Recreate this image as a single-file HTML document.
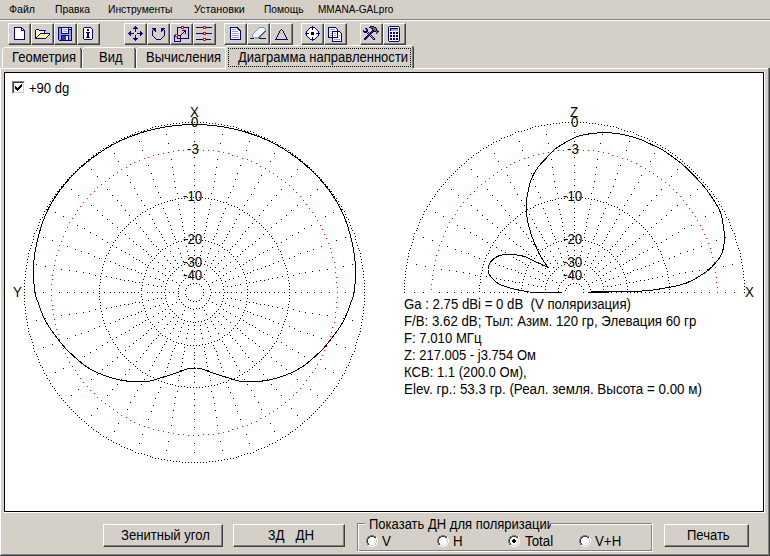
<!DOCTYPE html>
<html><head><meta charset="utf-8"><style>
html,body{margin:0;padding:0;}
body{width:770px;height:556px;overflow:hidden;background:#d4d0c8;position:relative;font-family:"Liberation Sans", sans-serif;color:#000;}
.a{position:absolute;}
.t{position:absolute;white-space:pre;line-height:1;font-family:"Liberation Sans", sans-serif;color:#000;}
.btn{position:absolute;box-sizing:border-box;background:#d4d0c8;border-top:1px solid #fff;border-left:1px solid #fff;border-right:1px solid #404040;border-bottom:1px solid #404040;}
.btn::after{content:"";position:absolute;left:0;top:0;right:0;bottom:0;border-right:1px solid #808080;border-bottom:1px solid #808080;}
svg{position:absolute;overflow:visible;}
</style></head><body>

<div class="t" style="left:9px;top:4px;font-size:11px;transform-origin:0 0;transform:scaleX(0.9612);">Файл</div>
<div class="t" style="left:54.5px;top:4px;font-size:11px;transform-origin:0 0;transform:scaleX(0.9416);">Правка</div>
<div class="t" style="left:108.4px;top:4px;font-size:11px;transform-origin:0 0;transform:scaleX(0.9375);">Инструменты</div>
<div class="t" style="left:194.3px;top:4px;font-size:11px;transform-origin:0 0;transform:scaleX(0.9791);">Установки</div>
<div class="t" style="left:264.4px;top:4px;font-size:11px;transform-origin:0 0;transform:scaleX(0.9318);">Помощь</div>
<div class="t" style="left:317.5px;top:4px;font-size:11px;transform-origin:0 0;transform:scaleX(0.9136);">MMANA-GALpro</div>
<div class="a" style="left:0;top:19px;width:770px;height:1px;background:#808080"></div>
<div class="a" style="left:0;top:20px;width:770px;height:1px;background:#fff"></div>
<div class="btn" style="left:8px;top:23px;width:23px;height:22px"></div>
<div class="btn" style="left:31px;top:23px;width:23px;height:22px"></div>
<div class="btn" style="left:54px;top:23px;width:23px;height:22px"></div>
<div class="btn" style="left:77px;top:23px;width:23px;height:22px"></div>
<div class="btn" style="left:124px;top:23px;width:23px;height:22px"></div>
<div class="btn" style="left:147px;top:23px;width:23px;height:22px"></div>
<div class="btn" style="left:170px;top:23px;width:23px;height:22px"></div>
<div class="btn" style="left:193px;top:23px;width:23px;height:22px"></div>
<div class="btn" style="left:224px;top:23px;width:23px;height:22px"></div>
<div class="btn" style="left:247px;top:23px;width:23px;height:22px"></div>
<div class="btn" style="left:270px;top:23px;width:23px;height:22px"></div>
<div class="btn" style="left:301px;top:23px;width:23px;height:22px"></div>
<div class="btn" style="left:324px;top:23px;width:23px;height:22px"></div>
<div class="btn" style="left:360px;top:23px;width:23px;height:22px"></div>
<div class="btn" style="left:383px;top:23px;width:23px;height:22px"></div>
<svg class="a" style="left:0;top:0" width="770" height="50" viewBox="0 0 770 50" shape-rendering="crispEdges">
<path fill="#000080" d="M14 27h8v1h-8zM14 28h1v1h-1zM21 28h2v1h-2zM14 29h1v1h-1zM21 29h1v1h-1zM23 29h1v1h-1zM14 30h1v1h-1zM21 30h4v1h-4zM14 31h1v1h-1zM24 31h1v1h-1zM14 32h1v1h-1zM24 32h1v1h-1zM14 33h1v1h-1zM24 33h1v1h-1zM14 34h1v1h-1zM24 34h1v1h-1zM14 35h1v1h-1zM24 35h1v1h-1zM14 36h1v1h-1zM24 36h1v1h-1zM14 37h1v1h-1zM24 37h1v1h-1zM14 38h1v1h-1zM24 38h1v1h-1zM14 39h11v1h-11z"/><path fill="#ffffff" d="M15 28h6v1h-6zM15 29h6v1h-6zM22 29h1v1h-1zM15 30h6v1h-6zM15 31h9v1h-9zM15 32h9v1h-9zM15 33h9v1h-9zM15 34h9v1h-9zM15 35h9v1h-9zM15 36h9v1h-9zM15 37h9v1h-9zM15 38h9v1h-9z"/><path fill="#000080" d="M36 29h3v1h-3zM35 30h1v1h-1zM39 30h7v1h-7zM35 31h1v1h-1zM44 31h1v1h-1zM35 32h1v1h-1zM44 32h1v1h-1zM35 33h1v1h-1zM40 33h10v1h-10zM35 34h1v1h-1zM39 34h1v1h-1zM49 34h1v1h-1zM35 35h1v1h-1zM38 35h1v1h-1zM48 35h1v1h-1zM35 36h1v1h-1zM37 36h1v1h-1zM47 36h1v1h-1zM35 37h2v1h-2zM46 37h1v1h-1zM35 38h11v1h-11z"/><path fill="#ffffd8" d="M36 30h3v1h-3zM36 31h8v1h-8zM36 32h8v1h-8zM36 33h4v1h-4zM36 34h3v1h-3zM36 35h2v1h-2zM36 36h1v1h-1z"/><path fill="#ffff9c" d="M40 34h9v1h-9zM39 35h9v1h-9zM38 36h9v1h-9zM37 37h9v1h-9z"/><path fill="#000080" d="M58 27h14v1h-14zM58 28h1v1h-1zM61 28h1v1h-1zM68 28h1v1h-1zM71 28h1v1h-1zM58 29h1v1h-1zM61 29h1v1h-1zM68 29h4v1h-4zM58 30h1v1h-1zM61 30h1v1h-1zM68 30h1v1h-1zM71 30h1v1h-1zM58 31h1v1h-1zM61 31h1v1h-1zM68 31h1v1h-1zM71 31h1v1h-1zM58 32h1v1h-1zM61 32h1v1h-1zM68 32h1v1h-1zM71 32h1v1h-1zM58 33h1v1h-1zM61 33h8v1h-8zM71 33h1v1h-1zM58 34h1v1h-1zM71 34h1v1h-1zM58 35h1v1h-1zM61 35h8v1h-8zM71 35h1v1h-1zM58 36h1v1h-1zM61 36h1v1h-1zM68 36h1v1h-1zM71 36h1v1h-1zM58 37h1v1h-1zM61 37h1v1h-1zM68 37h1v1h-1zM71 37h1v1h-1zM58 38h1v1h-1zM61 38h1v1h-1zM68 38h1v1h-1zM71 38h1v1h-1zM58 39h1v1h-1zM61 39h1v1h-1zM68 39h1v1h-1zM71 39h1v1h-1zM59 40h13v1h-13z"/><path fill="#9c9cdc" d="M59 28h2v1h-2zM59 29h2v1h-2zM63 29h4v1h-4zM59 30h2v1h-2zM69 30h2v1h-2zM59 31h2v1h-2zM63 31h4v1h-4zM69 31h2v1h-2zM59 32h2v1h-2zM69 32h2v1h-2zM59 33h2v1h-2zM69 33h2v1h-2zM59 34h12v1h-12zM59 35h2v1h-2zM69 35h2v1h-2zM59 36h2v1h-2zM69 36h2v1h-2zM59 37h2v1h-2zM69 37h2v1h-2zM59 38h2v1h-2zM69 38h2v1h-2zM59 39h2v1h-2zM69 39h2v1h-2z"/><path fill="#f4f0e4" d="M62 28h6v1h-6zM69 28h2v1h-2zM62 29h1v1h-1zM67 29h1v1h-1zM62 30h6v1h-6zM62 31h1v1h-1zM67 31h1v1h-1zM62 32h6v1h-6zM66 36h2v1h-2zM66 37h2v1h-2zM66 38h2v1h-2zM66 39h2v1h-2z"/><path fill="#3434a8" d="M62 36h4v1h-4zM62 37h4v1h-4zM62 38h4v1h-4zM62 39h4v1h-4z"/><path fill="#000080" d="M84 27h7v1h-7zM83 28h1v1h-1zM91 28h1v1h-1zM83 29h1v1h-1zM87 29h2v1h-2zM92 29h1v1h-1zM83 30h1v1h-1zM87 30h2v1h-2zM92 30h1v1h-1zM83 31h1v1h-1zM92 31h1v1h-1zM83 32h1v1h-1zM86 32h4v1h-4zM92 32h1v1h-1zM83 33h1v1h-1zM87 33h2v1h-2zM92 33h1v1h-1zM83 34h1v1h-1zM87 34h2v1h-2zM92 34h1v1h-1zM83 35h1v1h-1zM87 35h2v1h-2zM92 35h1v1h-1zM83 36h1v1h-1zM87 36h2v1h-2zM92 36h1v1h-1zM83 37h1v1h-1zM86 37h4v1h-4zM92 37h1v1h-1zM83 38h1v1h-1zM92 38h1v1h-1zM84 39h8v1h-8z"/><path fill="#ffffff" d="M84 28h7v1h-7zM84 29h3v1h-3zM89 29h3v1h-3zM84 30h3v1h-3zM89 30h3v1h-3zM84 31h8v1h-8zM84 32h2v1h-2zM90 32h2v1h-2zM84 33h3v1h-3zM89 33h3v1h-3zM84 34h3v1h-3zM89 34h3v1h-3zM84 35h3v1h-3zM89 35h3v1h-3zM84 36h3v1h-3zM89 36h3v1h-3zM84 37h2v1h-2zM90 37h2v1h-2zM84 38h8v1h-8z"/><path fill="#000080" d="M135 26h1v1h-1zM134 27h3v1h-3zM133 28h5v1h-5zM135 29h1v1h-1zM135 30h1v1h-1zM130 31h1v1h-1zM135 31h1v1h-1zM140 31h1v1h-1zM129 32h2v1h-2zM140 32h2v1h-2zM128 33h6v1h-6zM137 33h6v1h-6zM129 34h2v1h-2zM140 34h2v1h-2zM130 35h1v1h-1zM135 35h1v1h-1zM140 35h1v1h-1zM135 36h1v1h-1zM135 37h1v1h-1zM133 38h5v1h-5zM134 39h3v1h-3zM135 40h1v1h-1z"/><path fill="#000080" d="M152 28h4v1h-4zM161 28h4v1h-4zM153 29h3v1h-3zM161 29h3v1h-3zM152 30h1v1h-1zM154 30h2v1h-2zM161 30h2v1h-2zM164 30h1v1h-1zM152 31h1v1h-1zM155 31h1v1h-1zM161 31h1v1h-1zM164 31h1v1h-1zM152 32h1v1h-1zM164 32h1v1h-1zM152 33h1v1h-1zM164 33h1v1h-1zM152 34h1v1h-1zM164 34h1v1h-1zM152 35h1v1h-1zM164 35h1v1h-1zM153 36h1v1h-1zM163 36h1v1h-1zM154 37h1v1h-1zM162 37h1v1h-1zM155 38h1v1h-1zM161 38h1v1h-1zM156 39h5v1h-5z"/><path fill="#ff0000" d="M181 26h3v1h-3zM181 27h1v1h-1zM183 27h1v1h-1zM181 28h3v1h-3zM175 34h3v1h-3zM175 35h1v1h-1zM177 35h1v1h-1zM175 36h3v1h-3z"/><path fill="#000080" d="M177 27h4v1h-4zM184 27h5v1h-5zM177 28h1v1h-1zM188 28h1v1h-1zM177 29h1v1h-1zM188 29h1v1h-1zM177 30h1v1h-1zM182 30h4v1h-4zM188 30h1v1h-1zM177 31h1v1h-1zM184 31h2v1h-2zM188 31h1v1h-1zM177 32h1v1h-1zM183 32h1v1h-1zM185 32h1v1h-1zM188 32h1v1h-1zM177 33h1v1h-1zM182 33h1v1h-1zM185 33h1v1h-1zM188 33h1v1h-1zM181 34h1v1h-1zM188 34h1v1h-1zM174 35h1v1h-1zM178 35h3v1h-3zM188 35h1v1h-1zM174 36h1v1h-1zM180 36h1v1h-1zM188 36h1v1h-1zM174 37h1v1h-1zM177 37h1v1h-1zM180 37h1v1h-1zM188 37h1v1h-1zM174 38h1v1h-1zM177 38h12v1h-12zM174 39h1v1h-1zM180 39h1v1h-1zM174 40h1v1h-1zM180 40h1v1h-1zM174 41h7v1h-7z"/><path fill="#ffffff" d="M182 27h1v1h-1zM176 35h1v1h-1z"/><path fill="#ff0000" d="M203 26h3v1h-3zM203 27h1v1h-1zM205 27h1v1h-1zM203 28h3v1h-3zM203 32h3v1h-3zM203 33h1v1h-1zM205 33h1v1h-1zM203 34h3v1h-3zM203 38h3v1h-3zM203 39h1v1h-1zM205 39h1v1h-1zM203 40h3v1h-3z"/><path fill="#000080" d="M196 27h7v1h-7zM206 27h6v1h-6zM196 33h7v1h-7zM206 33h6v1h-6zM196 39h7v1h-7zM206 39h5v1h-5z"/><path fill="#ffffff" d="M204 27h1v1h-1zM204 33h1v1h-1zM204 39h1v1h-1z"/><path fill="#000080" d="M230 27h8v1h-8zM230 28h1v1h-1zM237 28h2v1h-2zM230 29h1v1h-1zM238 29h2v1h-2zM230 30h1v1h-1zM239 30h2v1h-2zM230 31h1v1h-1zM240 31h1v1h-1zM230 32h1v1h-1zM240 32h1v1h-1zM230 33h1v1h-1zM240 33h1v1h-1zM230 34h1v1h-1zM240 34h1v1h-1zM230 35h1v1h-1zM240 35h1v1h-1zM230 36h1v1h-1zM240 36h1v1h-1zM230 37h1v1h-1zM240 37h1v1h-1zM230 38h1v1h-1zM240 38h1v1h-1zM230 39h11v1h-11z"/><path fill="#ffffff" d="M231 28h6v1h-6zM231 29h1v1h-1zM236 29h2v1h-2zM231 30h8v1h-8zM231 31h1v1h-1zM238 31h2v1h-2zM231 32h9v1h-9zM231 33h1v1h-1zM239 33h1v1h-1zM231 34h9v1h-9zM231 35h1v1h-1zM239 35h1v1h-1zM231 36h9v1h-9zM231 37h1v1h-1zM239 37h1v1h-1zM231 38h9v1h-9z"/><path fill="#a0a0d8" d="M232 29h4v1h-4zM232 31h6v1h-6zM232 33h7v1h-7zM232 35h7v1h-7zM232 37h7v1h-7z"/><path fill="#7896cc" d="M259 27h5v1h-5zM258 28h1v1h-1zM264 28h1v1h-1zM257 29h1v1h-1zM265 29h1v1h-1zM256 30h1v1h-1zM265 30h1v1h-1zM255 31h1v1h-1zM254 32h1v1h-1zM253 33h1v1h-1zM252 34h1v1h-1zM252 35h1v1h-1zM252 36h1v1h-1zM253 37h1v1h-1z"/><path fill="#f0f4fc" d="M259 28h5v1h-5zM258 29h7v1h-7zM257 30h8v1h-8zM256 31h8v1h-8zM255 32h8v1h-8zM254 33h8v1h-8zM253 34h8v1h-8zM253 35h7v1h-7zM253 36h6v1h-6z"/><path fill="#4a6088" d="M264 31h2v1h-2zM263 32h2v1h-2zM262 33h2v1h-2zM261 34h2v1h-2zM260 35h2v1h-2zM259 36h2v1h-2zM258 37h2v1h-2z"/><path fill="#98a8c8" d="M254 37h4v1h-4zM255 38h3v1h-3z"/><path fill="#000080" d="M250 38h4v1h-4zM259 38h7v1h-7z"/><path fill="#000080" d="M281 29h1v1h-1zM280 30h1v1h-1zM282 30h1v1h-1zM279 31h1v1h-1zM283 31h1v1h-1zM279 32h1v1h-1zM283 32h1v1h-1zM278 33h1v1h-1zM284 33h1v1h-1zM278 34h1v1h-1zM284 34h1v1h-1zM277 35h1v1h-1zM285 35h1v1h-1zM277 36h1v1h-1zM285 36h1v1h-1zM276 37h1v1h-1zM286 37h1v1h-1zM276 38h1v1h-1zM286 38h1v1h-1zM275 39h13v1h-13z"/><path fill="#000080" d="M312 26h1v1h-1zM310 27h5v1h-5zM309 28h1v1h-1zM312 28h1v1h-1zM315 28h1v1h-1zM308 29h1v1h-1zM312 29h1v1h-1zM316 29h1v1h-1zM307 30h1v1h-1zM317 30h1v1h-1zM306 31h1v1h-1zM318 31h1v1h-1zM306 32h1v1h-1zM318 32h1v1h-1zM305 33h4v1h-4zM316 33h4v1h-4zM306 34h1v1h-1zM318 34h1v1h-1zM306 35h1v1h-1zM318 35h1v1h-1zM307 36h1v1h-1zM317 36h1v1h-1zM308 37h1v1h-1zM312 37h1v1h-1zM316 37h1v1h-1zM309 38h1v1h-1zM312 38h1v1h-1zM315 38h1v1h-1zM310 39h5v1h-5zM312 40h1v1h-1z"/><path fill="#ffffff" d="M310 28h2v1h-2zM313 28h2v1h-2zM309 29h3v1h-3zM313 29h3v1h-3zM308 30h9v1h-9zM307 31h11v1h-11zM307 32h4v1h-4zM314 32h4v1h-4zM309 33h2v1h-2zM314 33h2v1h-2zM307 34h4v1h-4zM314 34h4v1h-4zM307 35h11v1h-11zM308 36h9v1h-9zM309 37h3v1h-3zM313 37h3v1h-3zM310 38h2v1h-2zM313 38h2v1h-2z"/><path fill="#000000" d="M311 32h3v1h-3zM311 33h3v1h-3zM311 34h3v1h-3z"/><path fill="#000080" d="M328 27h8v1h-8zM328 28h1v1h-1zM336 28h1v1h-1zM328 29h1v1h-1zM337 29h1v1h-1zM328 30h1v1h-1zM337 30h1v1h-1zM328 31h1v1h-1zM332 31h8v1h-8zM328 32h1v1h-1zM332 32h1v1h-1zM337 32h1v1h-1zM340 32h1v1h-1zM328 33h1v1h-1zM332 33h1v1h-1zM337 33h1v1h-1zM341 33h1v1h-1zM328 34h1v1h-1zM332 34h1v1h-1zM337 34h1v1h-1zM341 34h1v1h-1zM328 35h1v1h-1zM332 35h1v1h-1zM337 35h1v1h-1zM341 35h1v1h-1zM328 36h1v1h-1zM332 36h1v1h-1zM337 36h1v1h-1zM341 36h1v1h-1zM328 37h10v1h-10zM341 37h1v1h-1zM332 38h1v1h-1zM341 38h1v1h-1zM332 39h1v1h-1zM341 39h1v1h-1zM332 40h1v1h-1zM341 40h1v1h-1zM332 41h10v1h-10z"/><path fill="#ffffff" d="M329 28h7v1h-7zM329 29h1v1h-1zM335 29h2v1h-2zM329 30h8v1h-8zM329 31h1v1h-1zM331 31h1v1h-1zM329 32h3v1h-3zM333 32h4v1h-4zM338 32h2v1h-2zM329 33h1v1h-1zM333 33h1v1h-1zM336 33h1v1h-1zM338 33h3v1h-3zM329 34h3v1h-3zM333 34h4v1h-4zM338 34h3v1h-3zM329 35h1v1h-1zM333 35h1v1h-1zM336 35h1v1h-1zM338 35h1v1h-1zM340 35h1v1h-1zM329 36h3v1h-3zM333 36h4v1h-4zM338 36h3v1h-3zM338 37h3v1h-3zM333 38h8v1h-8zM333 39h1v1h-1zM340 39h1v1h-1zM333 40h8v1h-8z"/><path fill="#a0a0d8" d="M330 29h5v1h-5zM330 31h1v1h-1zM330 33h2v1h-2zM334 33h2v1h-2zM330 35h2v1h-2zM334 35h2v1h-2zM339 35h1v1h-1zM334 39h6v1h-6z"/><path fill="#000080" d="M370 26h4v1h-4zM369 27h2v1h-2zM374 27h2v1h-2zM365 28h2v1h-2zM371 28h2v1h-2zM376 28h1v1h-1zM366 29h2v1h-2zM372 29h1v1h-1zM376 29h1v1h-1zM363 30h1v1h-1zM366 30h2v1h-2zM372 30h2v1h-2zM376 30h2v1h-2zM363 31h5v1h-5zM371 31h1v1h-1zM373 31h3v1h-3zM377 31h2v1h-2zM364 32h3v1h-3zM368 32h1v1h-1zM370 32h1v1h-1zM372 32h1v1h-1zM377 32h1v1h-1zM367 33h1v1h-1zM369 33h1v1h-1zM371 33h1v1h-1zM376 33h1v1h-1zM368 34h1v1h-1zM370 34h1v1h-1zM367 35h1v1h-1zM369 35h1v1h-1zM371 35h1v1h-1zM366 36h1v1h-1zM368 36h1v1h-1zM370 36h1v1h-1zM372 36h1v1h-1zM365 37h1v1h-1zM367 37h1v1h-1zM371 37h1v1h-1zM373 37h1v1h-1zM364 38h1v1h-1zM366 38h1v1h-1zM372 38h1v1h-1zM374 38h1v1h-1zM364 39h2v1h-2zM373 39h2v1h-2z"/><path fill="#808000" d="M371 27h3v1h-3zM373 28h3v1h-3zM373 29h3v1h-3zM374 30h2v1h-2zM376 31h1v1h-1zM376 32h1v1h-1z"/><path fill="#f4f0dc" d="M364 30h2v1h-2z"/><path fill="#900000" d="M372 31h1v1h-1zM371 32h1v1h-1zM370 33h1v1h-1zM369 34h1v1h-1zM368 35h1v1h-1zM367 36h1v1h-1zM366 37h1v1h-1zM365 38h1v1h-1z"/><path fill="#c0c0f0" d="M367 32h1v1h-1zM368 33h1v1h-1zM370 35h1v1h-1zM371 36h1v1h-1zM372 37h1v1h-1zM373 38h1v1h-1z"/><path fill="#000080" d="M389 26h10v1h-10zM388 27h1v1h-1zM399 27h1v1h-1zM388 28h1v1h-1zM390 28h8v1h-8zM399 28h1v1h-1zM388 29h1v1h-1zM390 29h1v1h-1zM399 29h1v1h-1zM388 30h1v1h-1zM390 30h1v1h-1zM399 30h1v1h-1zM388 31h1v1h-1zM399 31h1v1h-1zM388 32h1v1h-1zM390 32h2v1h-2zM393 32h2v1h-2zM396 32h2v1h-2zM399 32h1v1h-1zM388 33h1v1h-1zM390 33h2v1h-2zM393 33h2v1h-2zM396 33h2v1h-2zM399 33h1v1h-1zM388 34h1v1h-1zM399 34h1v1h-1zM388 35h1v1h-1zM390 35h2v1h-2zM393 35h2v1h-2zM396 35h2v1h-2zM399 35h1v1h-1zM388 36h1v1h-1zM390 36h2v1h-2zM393 36h2v1h-2zM396 36h2v1h-2zM399 36h1v1h-1zM388 37h1v1h-1zM399 37h1v1h-1zM388 38h1v1h-1zM390 38h2v1h-2zM393 38h2v1h-2zM396 38h2v1h-2zM399 38h1v1h-1zM388 39h1v1h-1zM390 39h2v1h-2zM393 39h2v1h-2zM396 39h2v1h-2zM399 39h1v1h-1zM388 40h1v1h-1zM399 40h1v1h-1zM389 41h10v1h-10z"/><path fill="#ffffff" d="M389 27h10v1h-10zM389 28h1v1h-1zM398 28h1v1h-1zM389 29h1v1h-1zM398 29h1v1h-1zM389 30h1v1h-1zM398 30h1v1h-1zM389 31h10v1h-10zM389 32h1v1h-1zM392 32h1v1h-1zM395 32h1v1h-1zM398 32h1v1h-1zM389 33h1v1h-1zM392 33h1v1h-1zM395 33h1v1h-1zM398 33h1v1h-1zM389 34h10v1h-10zM389 35h1v1h-1zM392 35h1v1h-1zM395 35h1v1h-1zM398 35h1v1h-1zM389 36h1v1h-1zM392 36h1v1h-1zM395 36h1v1h-1zM398 36h1v1h-1zM389 37h10v1h-10zM389 38h1v1h-1zM392 38h1v1h-1zM395 38h1v1h-1zM398 38h1v1h-1zM389 39h1v1h-1zM392 39h1v1h-1zM395 39h1v1h-1zM398 39h1v1h-1zM389 40h10v1h-10z"/><path fill="#9c9cdc" d="M391 29h7v1h-7zM391 30h7v1h-7z"/>
</svg>
<div class="a" style="left:0;top:68px;width:768px;height:1px;background:#fff"></div>
<div class="a" style="left:0;top:68px;width:1px;height:487px;background:#fff"></div>
<div class="a" style="left:768px;top:68px;width:1px;height:487px;background:#808080"></div>
<div class="a" style="left:769px;top:68px;width:1px;height:488px;background:#404040"></div>
<div class="a" style="left:1px;top:554px;width:768px;height:1px;background:#808080"></div>
<div class="a" style="left:0;top:555px;width:770px;height:1px;background:#404040"></div>
<div class="a" style="left:2px;top:47px;width:80px;height:21px;background:#d4d0c8"></div>
<div class="a" style="left:2px;top:49px;width:1px;height:19px;background:#fff"></div>
<div class="a" style="left:3px;top:48px;width:1px;height:1px;background:#fff"></div>
<div class="a" style="left:4px;top:47px;width:76px;height:1px;background:#fff"></div>
<div class="a" style="left:81px;top:49px;width:1px;height:19px;background:#404040"></div>
<div class="a" style="left:80px;top:48px;width:1px;height:1px;background:#404040"></div>
<div class="a" style="left:80px;top:49px;width:1px;height:19px;background:#808080"></div>
<div class="t" style="left:12px;top:50px;font-size:14px;transform-origin:0 0;transform:scaleX(0.9300)">Геометрия</div>
<div class="a" style="left:82px;top:47px;width:54px;height:21px;background:#d4d0c8"></div>
<div class="a" style="left:82px;top:49px;width:1px;height:19px;background:#fff"></div>
<div class="a" style="left:83px;top:48px;width:1px;height:1px;background:#fff"></div>
<div class="a" style="left:84px;top:47px;width:50px;height:1px;background:#fff"></div>
<div class="a" style="left:135px;top:49px;width:1px;height:19px;background:#404040"></div>
<div class="a" style="left:134px;top:48px;width:1px;height:1px;background:#404040"></div>
<div class="a" style="left:134px;top:49px;width:1px;height:19px;background:#808080"></div>
<div class="t" style="left:99px;top:50px;font-size:14px;transform-origin:0 0;transform:scaleX(0.9300)">Вид</div>
<div class="a" style="left:136px;top:47px;width:90px;height:21px;background:#d4d0c8"></div>
<div class="a" style="left:136px;top:49px;width:1px;height:19px;background:#fff"></div>
<div class="a" style="left:137px;top:48px;width:1px;height:1px;background:#fff"></div>
<div class="a" style="left:138px;top:47px;width:87px;height:1px;background:#fff"></div>
<div class="t" style="left:146px;top:50px;font-size:14px;transform-origin:0 0;transform:scaleX(0.9300)">Вычисления</div>
<div class="a" style="left:225px;top:45px;width:189px;height:25px;background:#d4d0c8"></div>
<div class="a" style="left:225px;top:47px;width:1px;height:23px;background:#fff"></div>
<div class="a" style="left:226px;top:46px;width:1px;height:1px;background:#fff"></div>
<div class="a" style="left:227px;top:45px;width:185px;height:1px;background:#fff"></div>
<div class="a" style="left:413px;top:47px;width:1px;height:21px;background:#404040"></div>
<div class="a" style="left:412px;top:46px;width:1px;height:1px;background:#404040"></div>
<div class="a" style="left:412px;top:47px;width:1px;height:21px;background:#808080"></div>
<div class="t" style="left:237.5px;top:50px;font-size:14px;transform-origin:0 0;transform:scaleX(0.9300)">Диаграмма направленности</div>
<div class="a" style="left:228px;top:48px;width:183px;height:19px;box-sizing:border-box;border:1px dotted #000"></div>
<div class="a" style="left:4px;top:72px;width:760px;height:440px;box-sizing:border-box;border:1px solid #000;background:#fff"></div>
<div class="a" style="left:764px;top:72px;width:1px;height:441px;background:#fff"></div>
<div class="a" style="left:4px;top:512px;width:761px;height:1px;background:#fff"></div>
<div class="a" style="left:12px;top:81px;width:13px;height:13px;box-sizing:border-box;border-top:1px solid #808080;border-left:1px solid #808080;border-right:1px solid #fff;border-bottom:1px solid #fff;"></div>
<div class="a" style="left:13px;top:82px;width:11px;height:11px;box-sizing:border-box;border-top:1px solid #404040;border-left:1px solid #404040;border-right:1px solid #d4d0c8;border-bottom:1px solid #d4d0c8;background:#fff"></div>
<svg class="a" style="left:0;top:0" width="770" height="556" shape-rendering="crispEdges"><path d="M21 84h1v1h-1zM20 85h2v1h-2zM15 86h1v1h-1zM19 86h3v1h-3zM15 87h2v1h-2zM18 87h3v1h-3zM15 88h5v1h-5zM16 89h3v1h-3zM17 90h1v1h-1z" fill="#000"/></svg>
<div class="t" style="left:29px;top:81px;font-size:14px;transform-origin:0 0;transform:scaleX(0.9300)">+90 dg</div>
<svg class="a" style="left:0;top:0" width="770" height="556" viewBox="0 0 770 556" shape-rendering="crispEdges">
<path d="M182 122h1v1h-1zM185 122h1v1h-1zM188 122h1v1h-1zM191 122h1v1h-1zM194 122h1v1h-1zM197 122h1v1h-1zM200 122h1v1h-1zM203 122h1v1h-1zM206 122h1v1h-1zM562 122h1v1h-1zM565 122h1v1h-1zM568 122h1v1h-1zM571 122h1v1h-1zM574 122h1v1h-1zM577 122h1v1h-1zM580 122h1v1h-1zM583 122h1v1h-1zM586 122h1v1h-1zM173 123h1v1h-1zM176 123h1v1h-1zM179 123h1v1h-1zM209 123h1v1h-1zM212 123h1v1h-1zM215 123h1v1h-1zM553 123h1v1h-1zM556 123h1v1h-1zM559 123h1v1h-1zM589 123h1v1h-1zM592 123h1v1h-1zM595 123h1v1h-1zM167 124h1v1h-1zM170 124h1v1h-1zM218 124h1v1h-1zM221 124h1v1h-1zM547 124h1v1h-1zM550 124h1v1h-1zM598 124h1v1h-1zM601 124h1v1h-1zM161 125h1v1h-1zM164 125h1v1h-1zM224 125h1v1h-1zM227 125h1v1h-1zM541 125h1v1h-1zM544 125h1v1h-1zM604 125h1v1h-1zM607 125h1v1h-1zM155 126h1v1h-1zM158 126h1v1h-1zM230 126h1v1h-1zM233 126h1v1h-1zM535 126h1v1h-1zM538 126h1v1h-1zM610 126h1v1h-1zM613 126h1v1h-1zM152 127h1v1h-1zM236 127h1v1h-1zM532 127h1v1h-1zM616 127h1v1h-1zM150 128h1v1h-1zM238 128h1v1h-1zM530 128h1v1h-1zM618 128h1v1h-1zM147 129h1v1h-1zM241 129h1v1h-1zM527 129h1v1h-1zM621 129h1v1h-1zM144 130h1v1h-1zM244 130h1v1h-1zM524 130h1v1h-1zM624 130h1v1h-1zM138 131h1v1h-1zM141 131h1v1h-1zM247 131h1v1h-1zM250 131h1v1h-1zM518 131h1v1h-1zM521 131h1v1h-1zM627 131h1v1h-1zM630 131h1v1h-1zM135 132h1v1h-1zM194 132h1v1h-1zM253 132h1v1h-1zM515 132h1v1h-1zM574 132h1v1h-1zM633 132h1v1h-1zM132 134h1v1h-1zM166 134h1v1h-1zM222 134h1v1h-1zM256 134h1v1h-1zM512 134h1v1h-1zM546 134h1v1h-1zM602 134h1v1h-1zM636 134h1v1h-1zM130 135h1v1h-1zM258 135h1v1h-1zM510 135h1v1h-1zM638 135h1v1h-1zM127 136h1v1h-1zM261 136h1v1h-1zM507 136h1v1h-1zM641 136h1v1h-1zM124 137h1v1h-1zM264 137h1v1h-1zM504 137h1v1h-1zM644 137h1v1h-1zM121 138h1v1h-1zM267 138h1v1h-1zM501 138h1v1h-1zM647 138h1v1h-1zM119 140h1v1h-1zM269 140h1v1h-1zM499 140h1v1h-1zM649 140h1v1h-1zM116 141h1v1h-1zM139 141h1v1h-1zM194 141h1v1h-1zM249 141h1v1h-1zM272 141h1v1h-1zM496 141h1v1h-1zM519 141h1v1h-1zM574 141h1v1h-1zM629 141h1v1h-1zM652 141h1v1h-1zM113 142h1v1h-1zM275 142h1v1h-1zM493 142h1v1h-1zM655 142h1v1h-1zM168 143h1v1h-1zM220 143h1v1h-1zM548 143h1v1h-1zM600 143h1v1h-1zM111 144h1v1h-1zM277 144h1v1h-1zM491 144h1v1h-1zM657 144h1v1h-1zM108 145h1v1h-1zM280 145h1v1h-1zM488 145h1v1h-1zM660 145h1v1h-1zM106 147h1v1h-1zM282 147h1v1h-1zM486 147h1v1h-1zM662 147h1v1h-1zM103 148h1v1h-1zM285 148h1v1h-1zM483 148h1v1h-1zM665 148h1v1h-1zM100 150h1v1h-1zM142 150h1v1h-1zM246 150h1v1h-1zM288 150h1v1h-1zM480 150h1v1h-1zM522 150h1v1h-1zM626 150h1v1h-1zM668 150h1v1h-1zM98 152h1v1h-1zM290 152h1v1h-1zM478 152h1v1h-1zM670 152h1v1h-1zM96 153h1v1h-1zM114 153h1v1h-1zM274 153h1v1h-1zM292 153h1v1h-1zM476 153h1v1h-1zM494 153h1v1h-1zM654 153h1v1h-1zM672 153h1v1h-1zM93 155h1v1h-1zM295 155h1v1h-1zM473 155h1v1h-1zM675 155h1v1h-1zM91 157h1v1h-1zM194 157h1v1h-1zM297 157h1v1h-1zM471 157h1v1h-1zM574 157h1v1h-1zM677 157h1v1h-1zM88 159h1v1h-1zM171 159h1v1h-1zM217 159h1v1h-1zM300 159h1v1h-1zM468 159h1v1h-1zM551 159h1v1h-1zM597 159h1v1h-1zM680 159h1v1h-1zM86 161h1v1h-1zM118 161h1v1h-1zM270 161h1v1h-1zM302 161h1v1h-1zM466 161h1v1h-1zM498 161h1v1h-1zM650 161h1v1h-1zM682 161h1v1h-1zM84 163h1v1h-1zM304 163h1v1h-1zM464 163h1v1h-1zM684 163h1v1h-1zM81 165h1v1h-1zM148 165h1v1h-1zM194 165h1v1h-1zM240 165h1v1h-1zM307 165h1v1h-1zM461 165h1v1h-1zM528 165h1v1h-1zM574 165h1v1h-1zM620 165h1v1h-1zM687 165h1v1h-1zM79 167h1v1h-1zM172 167h1v1h-1zM216 167h1v1h-1zM309 167h1v1h-1zM459 167h1v1h-1zM552 167h1v1h-1zM596 167h1v1h-1zM689 167h1v1h-1zM77 169h1v1h-1zM91 169h1v1h-1zM297 169h1v1h-1zM311 169h1v1h-1zM457 169h1v1h-1zM471 169h1v1h-1zM677 169h1v1h-1zM691 169h1v1h-1zM75 171h1v1h-1zM313 171h1v1h-1zM455 171h1v1h-1zM693 171h1v1h-1zM194 172h1v1h-1zM574 172h1v1h-1zM73 173h1v1h-1zM151 173h1v1h-1zM237 173h1v1h-1zM315 173h1v1h-1zM453 173h1v1h-1zM531 173h1v1h-1zM617 173h1v1h-1zM695 173h1v1h-1zM173 174h1v1h-1zM215 174h1v1h-1zM553 174h1v1h-1zM595 174h1v1h-1zM71 175h1v1h-1zM127 175h1v1h-1zM261 175h1v1h-1zM317 175h1v1h-1zM451 175h1v1h-1zM507 175h1v1h-1zM641 175h1v1h-1zM697 175h1v1h-1zM97 176h1v1h-1zM291 176h1v1h-1zM477 176h1v1h-1zM671 176h1v1h-1zM69 177h1v1h-1zM319 177h1v1h-1zM449 177h1v1h-1zM699 177h1v1h-1zM67 179h1v1h-1zM153 179h1v1h-1zM194 179h1v1h-1zM235 179h1v1h-1zM321 179h1v1h-1zM447 179h1v1h-1zM533 179h1v1h-1zM574 179h1v1h-1zM615 179h1v1h-1zM701 179h1v1h-1zM174 181h1v1h-1zM214 181h1v1h-1zM554 181h1v1h-1zM594 181h1v1h-1zM65 182h1v1h-1zM130 182h1v1h-1zM258 182h1v1h-1zM323 182h1v1h-1zM445 182h1v1h-1zM510 182h1v1h-1zM638 182h1v1h-1zM703 182h1v1h-1zM63 184h1v1h-1zM325 184h1v1h-1zM443 184h1v1h-1zM705 184h1v1h-1zM194 185h1v1h-1zM574 185h1v1h-1zM61 186h1v1h-1zM155 186h1v1h-1zM233 186h1v1h-1zM327 186h1v1h-1zM441 186h1v1h-1zM535 186h1v1h-1zM613 186h1v1h-1zM707 186h1v1h-1zM175 187h1v1h-1zM213 187h1v1h-1zM555 187h1v1h-1zM593 187h1v1h-1zM134 188h1v1h-1zM254 188h1v1h-1zM514 188h1v1h-1zM634 188h1v1h-1zM59 189h1v1h-1zM71 189h1v1h-1zM107 189h1v1h-1zM281 189h1v1h-1zM317 189h1v1h-1zM329 189h1v1h-1zM439 189h1v1h-1zM451 189h1v1h-1zM487 189h1v1h-1zM661 189h1v1h-1zM697 189h1v1h-1zM709 189h1v1h-1zM57 191h1v1h-1zM194 191h1v1h-1zM331 191h1v1h-1zM437 191h1v1h-1zM574 191h1v1h-1zM711 191h1v1h-1zM158 192h1v1h-1zM230 192h1v1h-1zM538 192h1v1h-1zM610 192h1v1h-1zM177 193h1v1h-1zM211 193h1v1h-1zM557 193h1v1h-1zM591 193h1v1h-1zM55 194h1v1h-1zM137 194h1v1h-1zM251 194h1v1h-1zM333 194h1v1h-1zM435 194h1v1h-1zM517 194h1v1h-1zM631 194h1v1h-1zM713 194h1v1h-1zM78 195h1v1h-1zM112 195h1v1h-1zM276 195h1v1h-1zM310 195h1v1h-1zM458 195h1v1h-1zM492 195h1v1h-1zM656 195h1v1h-1zM690 195h1v1h-1zM54 196h1v1h-1zM334 196h1v1h-1zM434 196h1v1h-1zM714 196h1v1h-1zM160 197h1v1h-1zM187 197h1v1h-1zM190 197h1v1h-1zM193 197h1v1h-1zM196 197h1v1h-1zM199 197h1v1h-1zM202 197h1v1h-1zM228 197h1v1h-1zM540 197h1v1h-1zM567 197h1v1h-1zM570 197h1v1h-1zM573 197h1v1h-1zM576 197h1v1h-1zM579 197h1v1h-1zM582 197h1v1h-1zM608 197h1v1h-1zM52 198h1v1h-1zM178 198h1v1h-1zM181 198h1v1h-1zM184 198h1v1h-1zM205 198h1v1h-1zM208 198h1v1h-1zM336 198h1v1h-1zM432 198h1v1h-1zM558 198h1v1h-1zM561 198h1v1h-1zM564 198h1v1h-1zM585 198h1v1h-1zM588 198h1v1h-1zM716 198h1v1h-1zM175 199h1v1h-1zM211 199h1v1h-1zM214 199h1v1h-1zM555 199h1v1h-1zM591 199h1v1h-1zM594 199h1v1h-1zM117 200h1v1h-1zM141 200h1v1h-1zM170 200h1v1h-1zM172 200h1v1h-1zM217 200h1v1h-1zM247 200h1v1h-1zM271 200h1v1h-1zM497 200h1v1h-1zM521 200h1v1h-1zM550 200h1v1h-1zM552 200h1v1h-1zM597 200h1v1h-1zM627 200h1v1h-1zM651 200h1v1h-1zM50 201h1v1h-1zM167 201h1v1h-1zM220 201h1v1h-1zM338 201h1v1h-1zM430 201h1v1h-1zM547 201h1v1h-1zM600 201h1v1h-1zM718 201h1v1h-1zM164 202h1v1h-1zM194 202h1v1h-1zM223 202h1v1h-1zM226 202h1v1h-1zM544 202h1v1h-1zM574 202h1v1h-1zM603 202h1v1h-1zM606 202h1v1h-1zM161 203h1v1h-1zM541 203h1v1h-1zM49 204h1v1h-1zM158 204h1v1h-1zM178 204h1v1h-1zM210 204h1v1h-1zM228 204h1v1h-1zM339 204h1v1h-1zM429 204h1v1h-1zM538 204h1v1h-1zM558 204h1v1h-1zM590 204h1v1h-1zM608 204h1v1h-1zM719 204h1v1h-1zM91 205h1v1h-1zM121 205h1v1h-1zM144 205h1v1h-1zM155 205h1v1h-1zM231 205h1v1h-1zM244 205h1v1h-1zM267 205h1v1h-1zM297 205h1v1h-1zM471 205h1v1h-1zM501 205h1v1h-1zM524 205h1v1h-1zM535 205h1v1h-1zM611 205h1v1h-1zM624 205h1v1h-1zM647 205h1v1h-1zM677 205h1v1h-1zM47 206h1v1h-1zM234 206h1v1h-1zM341 206h1v1h-1zM427 206h1v1h-1zM614 206h1v1h-1zM721 206h1v1h-1zM153 207h1v1h-1zM237 207h1v1h-1zM533 207h1v1h-1zM617 207h1v1h-1zM150 208h1v1h-1zM163 208h1v1h-1zM194 208h1v1h-1zM225 208h1v1h-1zM530 208h1v1h-1zM543 208h1v1h-1zM574 208h1v1h-1zM605 208h1v1h-1zM46 209h1v1h-1zM147 209h1v1h-1zM179 209h1v1h-1zM209 209h1v1h-1zM239 209h1v1h-1zM342 209h1v1h-1zM426 209h1v1h-1zM527 209h1v1h-1zM559 209h1v1h-1zM589 209h1v1h-1zM619 209h1v1h-1zM722 209h1v1h-1zM97 210h1v1h-1zM125 210h1v1h-1zM242 210h1v1h-1zM263 210h1v1h-1zM291 210h1v1h-1zM477 210h1v1h-1zM505 210h1v1h-1zM622 210h1v1h-1zM643 210h1v1h-1zM671 210h1v1h-1zM44 211h1v1h-1zM145 211h1v1h-1zM344 211h1v1h-1zM424 211h1v1h-1zM525 211h1v1h-1zM724 211h1v1h-1zM55 212h1v1h-1zM142 212h1v1h-1zM194 212h1v1h-1zM244 212h1v1h-1zM333 212h1v1h-1zM435 212h1v1h-1zM522 212h1v1h-1zM574 212h1v1h-1zM624 212h1v1h-1zM713 212h1v1h-1zM165 213h1v1h-1zM223 213h1v1h-1zM247 213h1v1h-1zM545 213h1v1h-1zM603 213h1v1h-1zM627 213h1v1h-1zM43 214h1v1h-1zM140 214h1v1h-1zM149 214h1v1h-1zM180 214h1v1h-1zM208 214h1v1h-1zM239 214h1v1h-1zM345 214h1v1h-1zM423 214h1v1h-1zM520 214h1v1h-1zM529 214h1v1h-1zM560 214h1v1h-1zM588 214h1v1h-1zM619 214h1v1h-1zM725 214h1v1h-1zM102 215h1v1h-1zM129 215h1v1h-1zM249 215h1v1h-1zM259 215h1v1h-1zM286 215h1v1h-1zM482 215h1v1h-1zM509 215h1v1h-1zM629 215h1v1h-1zM639 215h1v1h-1zM666 215h1v1h-1zM63 216h1v1h-1zM137 216h1v1h-1zM325 216h1v1h-1zM443 216h1v1h-1zM517 216h1v1h-1zM705 216h1v1h-1zM42 217h1v1h-1zM167 217h1v1h-1zM194 217h1v1h-1zM221 217h1v1h-1zM252 217h1v1h-1zM346 217h1v1h-1zM422 217h1v1h-1zM547 217h1v1h-1zM574 217h1v1h-1zM601 217h1v1h-1zM632 217h1v1h-1zM726 217h1v1h-1zM135 218h1v1h-1zM181 218h1v1h-1zM207 218h1v1h-1zM515 218h1v1h-1zM561 218h1v1h-1zM587 218h1v1h-1zM40 219h1v1h-1zM107 219h1v1h-1zM152 219h1v1h-1zM236 219h1v1h-1zM254 219h1v1h-1zM281 219h1v1h-1zM348 219h1v1h-1zM420 219h1v1h-1zM487 219h1v1h-1zM532 219h1v1h-1zM616 219h1v1h-1zM634 219h1v1h-1zM661 219h1v1h-1zM728 219h1v1h-1zM133 220h1v1h-1zM513 220h1v1h-1zM168 221h1v1h-1zM194 221h1v1h-1zM220 221h1v1h-1zM256 221h1v1h-1zM548 221h1v1h-1zM574 221h1v1h-1zM600 221h1v1h-1zM636 221h1v1h-1zM39 222h1v1h-1zM130 222h1v1h-1zM182 222h1v1h-1zM206 222h1v1h-1zM349 222h1v1h-1zM419 222h1v1h-1zM510 222h1v1h-1zM562 222h1v1h-1zM586 222h1v1h-1zM729 222h1v1h-1zM112 223h1v1h-1zM136 223h1v1h-1zM154 223h1v1h-1zM234 223h1v1h-1zM252 223h1v1h-1zM259 223h1v1h-1zM276 223h1v1h-1zM492 223h1v1h-1zM516 223h1v1h-1zM534 223h1v1h-1zM614 223h1v1h-1zM632 223h1v1h-1zM639 223h1v1h-1zM656 223h1v1h-1zM128 224h1v1h-1zM508 224h1v1h-1zM38 225h1v1h-1zM77 225h1v1h-1zM170 225h1v1h-1zM194 225h1v1h-1zM218 225h1v1h-1zM261 225h1v1h-1zM311 225h1v1h-1zM350 225h1v1h-1zM418 225h1v1h-1zM457 225h1v1h-1zM550 225h1v1h-1zM574 225h1v1h-1zM598 225h1v1h-1zM641 225h1v1h-1zM691 225h1v1h-1zM730 225h1v1h-1zM126 226h1v1h-1zM182 226h1v1h-1zM206 226h1v1h-1zM506 226h1v1h-1zM562 226h1v1h-1zM586 226h1v1h-1zM117 227h1v1h-1zM140 227h1v1h-1zM156 227h1v1h-1zM232 227h1v1h-1zM248 227h1v1h-1zM263 227h1v1h-1zM271 227h1v1h-1zM497 227h1v1h-1zM520 227h1v1h-1zM536 227h1v1h-1zM612 227h1v1h-1zM628 227h1v1h-1zM643 227h1v1h-1zM651 227h1v1h-1zM37 228h1v1h-1zM84 228h1v1h-1zM124 228h1v1h-1zM304 228h1v1h-1zM351 228h1v1h-1zM417 228h1v1h-1zM464 228h1v1h-1zM504 228h1v1h-1zM684 228h1v1h-1zM731 228h1v1h-1zM171 229h1v1h-1zM194 229h1v1h-1zM217 229h1v1h-1zM265 229h1v1h-1zM551 229h1v1h-1zM574 229h1v1h-1zM597 229h1v1h-1zM645 229h1v1h-1zM36 230h1v1h-1zM122 230h1v1h-1zM183 230h1v1h-1zM205 230h1v1h-1zM352 230h1v1h-1zM416 230h1v1h-1zM502 230h1v1h-1zM563 230h1v1h-1zM585 230h1v1h-1zM732 230h1v1h-1zM143 231h1v1h-1zM159 231h1v1h-1zM229 231h1v1h-1zM245 231h1v1h-1zM267 231h1v1h-1zM523 231h1v1h-1zM539 231h1v1h-1zM609 231h1v1h-1zM625 231h1v1h-1zM647 231h1v1h-1zM90 232h1v1h-1zM120 232h1v1h-1zM194 232h1v1h-1zM298 232h1v1h-1zM470 232h1v1h-1zM500 232h1v1h-1zM574 232h1v1h-1zM678 232h1v1h-1zM34 233h1v1h-1zM172 233h1v1h-1zM184 233h1v1h-1zM204 233h1v1h-1zM216 233h1v1h-1zM354 233h1v1h-1zM414 233h1v1h-1zM552 233h1v1h-1zM564 233h1v1h-1zM584 233h1v1h-1zM596 233h1v1h-1zM734 233h1v1h-1zM125 234h1v1h-1zM146 234h1v1h-1zM161 234h1v1h-1zM227 234h1v1h-1zM242 234h1v1h-1zM263 234h1v1h-1zM269 234h1v1h-1zM505 234h1v1h-1zM526 234h1v1h-1zM541 234h1v1h-1zM607 234h1v1h-1zM622 234h1v1h-1zM643 234h1v1h-1zM649 234h1v1h-1zM96 235h1v1h-1zM118 235h1v1h-1zM292 235h1v1h-1zM476 235h1v1h-1zM498 235h1v1h-1zM672 235h1v1h-1zM33 236h1v1h-1zM174 236h1v1h-1zM194 236h1v1h-1zM214 236h1v1h-1zM271 236h1v1h-1zM355 236h1v1h-1zM413 236h1v1h-1zM554 236h1v1h-1zM574 236h1v1h-1zM594 236h1v1h-1zM651 236h1v1h-1zM735 236h1v1h-1zM43 237h1v1h-1zM117 237h1v1h-1zM162 237h1v1h-1zM184 237h1v1h-1zM204 237h1v1h-1zM226 237h1v1h-1zM345 237h1v1h-1zM423 237h1v1h-1zM497 237h1v1h-1zM542 237h1v1h-1zM564 237h1v1h-1zM584 237h1v1h-1zM606 237h1v1h-1zM725 237h1v1h-1zM129 238h1v1h-1zM148 238h1v1h-1zM240 238h1v1h-1zM259 238h1v1h-1zM272 238h1v1h-1zM509 238h1v1h-1zM528 238h1v1h-1zM620 238h1v1h-1zM639 238h1v1h-1zM652 238h1v1h-1zM33 239h1v1h-1zM102 239h1v1h-1zM175 239h1v1h-1zM187 239h1v1h-1zM190 239h1v1h-1zM193 239h1v1h-1zM196 239h1v1h-1zM199 239h1v1h-1zM213 239h1v1h-1zM286 239h1v1h-1zM355 239h1v1h-1zM413 239h1v1h-1zM482 239h1v1h-1zM555 239h1v1h-1zM567 239h1v1h-1zM570 239h1v1h-1zM573 239h1v1h-1zM576 239h1v1h-1zM579 239h1v1h-1zM593 239h1v1h-1zM666 239h1v1h-1zM735 239h1v1h-1zM52 240h1v1h-1zM115 240h1v1h-1zM164 240h1v1h-1zM184 240h1v1h-1zM202 240h1v1h-1zM205 240h1v1h-1zM224 240h1v1h-1zM336 240h1v1h-1zM432 240h1v1h-1zM495 240h1v1h-1zM544 240h1v1h-1zM564 240h1v1h-1zM582 240h1v1h-1zM585 240h1v1h-1zM604 240h1v1h-1zM716 240h1v1h-1zM133 241h1v1h-1zM151 241h1v1h-1zM178 241h1v1h-1zM181 241h1v1h-1zM208 241h1v1h-1zM237 241h1v1h-1zM255 241h1v1h-1zM274 241h1v1h-1zM513 241h1v1h-1zM531 241h1v1h-1zM558 241h1v1h-1zM561 241h1v1h-1zM588 241h1v1h-1zM617 241h1v1h-1zM635 241h1v1h-1zM654 241h1v1h-1zM32 242h1v1h-1zM107 242h1v1h-1zM113 242h1v1h-1zM176 242h1v1h-1zM211 242h1v1h-1zM281 242h1v1h-1zM356 242h1v1h-1zM412 242h1v1h-1zM487 242h1v1h-1zM493 242h1v1h-1zM556 242h1v1h-1zM591 242h1v1h-1zM661 242h1v1h-1zM736 242h1v1h-1zM166 243h1v1h-1zM173 243h1v1h-1zM214 243h1v1h-1zM222 243h1v1h-1zM276 243h1v1h-1zM546 243h1v1h-1zM553 243h1v1h-1zM594 243h1v1h-1zM602 243h1v1h-1zM656 243h1v1h-1zM136 244h1v1h-1zM153 244h1v1h-1zM217 244h1v1h-1zM235 244h1v1h-1zM252 244h1v1h-1zM516 244h1v1h-1zM533 244h1v1h-1zM597 244h1v1h-1zM615 244h1v1h-1zM632 244h1v1h-1zM31 245h1v1h-1zM112 245h1v1h-1zM170 245h1v1h-1zM194 245h1v1h-1zM219 245h1v1h-1zM357 245h1v1h-1zM411 245h1v1h-1zM492 245h1v1h-1zM550 245h1v1h-1zM574 245h1v1h-1zM599 245h1v1h-1zM737 245h1v1h-1zM67 246h1v1h-1zM140 246h1v1h-1zM156 246h1v1h-1zM167 246h1v1h-1zM186 246h1v1h-1zM202 246h1v1h-1zM232 246h1v1h-1zM248 246h1v1h-1zM277 246h1v1h-1zM321 246h1v1h-1zM447 246h1v1h-1zM520 246h1v1h-1zM536 246h1v1h-1zM547 246h1v1h-1zM566 246h1v1h-1zM582 246h1v1h-1zM612 246h1v1h-1zM628 246h1v1h-1zM657 246h1v1h-1zM701 246h1v1h-1zM110 247h1v1h-1zM116 247h1v1h-1zM222 247h1v1h-1zM272 247h1v1h-1zM490 247h1v1h-1zM496 247h1v1h-1zM602 247h1v1h-1zM652 247h1v1h-1zM30 248h1v1h-1zM165 248h1v1h-1zM178 248h1v1h-1zM210 248h1v1h-1zM358 248h1v1h-1zM410 248h1v1h-1zM545 248h1v1h-1zM558 248h1v1h-1zM590 248h1v1h-1zM738 248h1v1h-1zM75 249h1v1h-1zM143 249h1v1h-1zM158 249h1v1h-1zM162 249h1v1h-1zM224 249h1v1h-1zM230 249h1v1h-1zM245 249h1v1h-1zM278 249h1v1h-1zM313 249h1v1h-1zM455 249h1v1h-1zM523 249h1v1h-1zM538 249h1v1h-1zM542 249h1v1h-1zM604 249h1v1h-1zM610 249h1v1h-1zM625 249h1v1h-1zM658 249h1v1h-1zM693 249h1v1h-1zM29 250h1v1h-1zM109 250h1v1h-1zM121 250h1v1h-1zM194 250h1v1h-1zM227 250h1v1h-1zM267 250h1v1h-1zM359 250h1v1h-1zM409 250h1v1h-1zM489 250h1v1h-1zM501 250h1v1h-1zM574 250h1v1h-1zM607 250h1v1h-1zM647 250h1v1h-1zM739 250h1v1h-1zM81 251h1v1h-1zM146 251h1v1h-1zM160 251h1v1h-1zM170 251h1v1h-1zM187 251h1v1h-1zM201 251h1v1h-1zM218 251h1v1h-1zM242 251h1v1h-1zM280 251h1v1h-1zM307 251h1v1h-1zM461 251h1v1h-1zM526 251h1v1h-1zM540 251h1v1h-1zM550 251h1v1h-1zM567 251h1v1h-1zM581 251h1v1h-1zM598 251h1v1h-1zM622 251h1v1h-1zM660 251h1v1h-1zM687 251h1v1h-1zM125 252h1v1h-1zM229 252h1v1h-1zM263 252h1v1h-1zM505 252h1v1h-1zM609 252h1v1h-1zM643 252h1v1h-1zM28 253h1v1h-1zM88 253h1v1h-1zM108 253h1v1h-1zM158 253h1v1h-1zM180 253h1v1h-1zM208 253h1v1h-1zM300 253h1v1h-1zM360 253h1v1h-1zM408 253h1v1h-1zM468 253h1v1h-1zM488 253h1v1h-1zM538 253h1v1h-1zM560 253h1v1h-1zM588 253h1v1h-1zM680 253h1v1h-1zM740 253h1v1h-1zM129 254h1v1h-1zM148 254h1v1h-1zM231 254h1v1h-1zM240 254h1v1h-1zM259 254h1v1h-1zM281 254h1v1h-1zM509 254h1v1h-1zM528 254h1v1h-1zM611 254h1v1h-1zM620 254h1v1h-1zM639 254h1v1h-1zM661 254h1v1h-1zM106 255h1v1h-1zM156 255h1v1h-1zM188 255h1v1h-1zM194 255h1v1h-1zM200 255h1v1h-1zM486 255h1v1h-1zM536 255h1v1h-1zM568 255h1v1h-1zM574 255h1v1h-1zM580 255h1v1h-1zM28 256h1v1h-1zM94 256h1v1h-1zM151 256h1v1h-1zM164 256h1v1h-1zM173 256h1v1h-1zM215 256h1v1h-1zM224 256h1v1h-1zM233 256h1v1h-1zM237 256h1v1h-1zM294 256h1v1h-1zM360 256h1v1h-1zM408 256h1v1h-1zM474 256h1v1h-1zM531 256h1v1h-1zM544 256h1v1h-1zM553 256h1v1h-1zM595 256h1v1h-1zM604 256h1v1h-1zM613 256h1v1h-1zM617 256h1v1h-1zM674 256h1v1h-1zM740 256h1v1h-1zM133 257h1v1h-1zM181 257h1v1h-1zM207 257h1v1h-1zM255 257h1v1h-1zM282 257h1v1h-1zM513 257h1v1h-1zM561 257h1v1h-1zM587 257h1v1h-1zM635 257h1v1h-1zM662 257h1v1h-1zM99 258h1v1h-1zM105 258h1v1h-1zM154 258h1v1h-1zM289 258h1v1h-1zM479 258h1v1h-1zM485 258h1v1h-1zM534 258h1v1h-1zM669 258h1v1h-1zM27 259h1v1h-1zM136 259h1v1h-1zM188 259h1v1h-1zM194 259h1v1h-1zM200 259h1v1h-1zM235 259h1v1h-1zM252 259h1v1h-1zM361 259h1v1h-1zM407 259h1v1h-1zM516 259h1v1h-1zM568 259h1v1h-1zM574 259h1v1h-1zM580 259h1v1h-1zM615 259h1v1h-1zM632 259h1v1h-1zM741 259h1v1h-1zM139 260h1v1h-1zM152 260h1v1h-1zM167 260h1v1h-1zM175 260h1v1h-1zM213 260h1v1h-1zM221 260h1v1h-1zM249 260h1v1h-1zM283 260h1v1h-1zM519 260h1v1h-1zM532 260h1v1h-1zM547 260h1v1h-1zM555 260h1v1h-1zM593 260h1v1h-1zM601 260h1v1h-1zM629 260h1v1h-1zM663 260h1v1h-1zM104 261h1v1h-1zM110 261h1v1h-1zM183 261h1v1h-1zM205 261h1v1h-1zM237 261h1v1h-1zM278 261h1v1h-1zM484 261h1v1h-1zM490 261h1v1h-1zM563 261h1v1h-1zM585 261h1v1h-1zM617 261h1v1h-1zM658 261h1v1h-1zM27 262h1v1h-1zM142 262h1v1h-1zM150 262h1v1h-1zM158 262h1v1h-1zM193 262h1v1h-1zM195 262h1v1h-1zM230 262h1v1h-1zM246 262h1v1h-1zM361 262h1v1h-1zM407 262h1v1h-1zM522 262h1v1h-1zM530 262h1v1h-1zM538 262h1v1h-1zM573 262h1v1h-1zM575 262h1v1h-1zM610 262h1v1h-1zM626 262h1v1h-1zM741 262h1v1h-1zM115 263h1v1h-1zM170 263h1v1h-1zM177 263h1v1h-1zM187 263h1v1h-1zM190 263h1v1h-1zM198 263h1v1h-1zM201 263h1v1h-1zM211 263h1v1h-1zM218 263h1v1h-1zM273 263h1v1h-1zM284 263h1v1h-1zM495 263h1v1h-1zM550 263h1v1h-1zM557 263h1v1h-1zM567 263h1v1h-1zM570 263h1v1h-1zM578 263h1v1h-1zM581 263h1v1h-1zM591 263h1v1h-1zM598 263h1v1h-1zM653 263h1v1h-1zM664 263h1v1h-1zM36 264h1v1h-1zM103 264h1v1h-1zM145 264h1v1h-1zM184 264h1v1h-1zM204 264h1v1h-1zM239 264h1v1h-1zM243 264h1v1h-1zM352 264h1v1h-1zM416 264h1v1h-1zM483 264h1v1h-1zM525 264h1v1h-1zM564 264h1v1h-1zM584 264h1v1h-1zM619 264h1v1h-1zM623 264h1v1h-1zM732 264h1v1h-1zM26 265h1v1h-1zM119 265h1v1h-1zM148 265h1v1h-1zM162 265h1v1h-1zM181 265h1v1h-1zM207 265h1v1h-1zM226 265h1v1h-1zM269 265h1v1h-1zM285 265h1v1h-1zM362 265h1v1h-1zM406 265h1v1h-1zM499 265h1v1h-1zM528 265h1v1h-1zM542 265h1v1h-1zM561 265h1v1h-1zM587 265h1v1h-1zM606 265h1v1h-1zM649 265h1v1h-1zM665 265h1v1h-1zM742 265h1v1h-1zM45 266h1v1h-1zM123 266h1v1h-1zM240 266h1v1h-1zM265 266h1v1h-1zM343 266h1v1h-1zM425 266h1v1h-1zM503 266h1v1h-1zM620 266h1v1h-1zM645 266h1v1h-1zM723 266h1v1h-1zM102 267h1v1h-1zM147 267h1v1h-1zM173 267h1v1h-1zM178 267h1v1h-1zM194 267h1v1h-1zM210 267h1v1h-1zM215 267h1v1h-1zM482 267h1v1h-1zM527 267h1v1h-1zM553 267h1v1h-1zM558 267h1v1h-1zM574 267h1v1h-1zM590 267h1v1h-1zM595 267h1v1h-1zM26 268h1v1h-1zM127 268h1v1h-1zM153 268h1v1h-1zM165 268h1v1h-1zM223 268h1v1h-1zM235 268h1v1h-1zM261 268h1v1h-1zM286 268h1v1h-1zM362 268h1v1h-1zM406 268h1v1h-1zM507 268h1v1h-1zM533 268h1v1h-1zM545 268h1v1h-1zM603 268h1v1h-1zM615 268h1v1h-1zM641 268h1v1h-1zM666 268h1v1h-1zM742 268h1v1h-1zM61 269h1v1h-1zM131 269h1v1h-1zM176 269h1v1h-1zM212 269h1v1h-1zM242 269h1v1h-1zM257 269h1v1h-1zM327 269h1v1h-1zM441 269h1v1h-1zM511 269h1v1h-1zM556 269h1v1h-1zM592 269h1v1h-1zM622 269h1v1h-1zM637 269h1v1h-1zM707 269h1v1h-1zM69 270h1v1h-1zM102 270h1v1h-1zM135 270h1v1h-1zM146 270h1v1h-1zM182 270h1v1h-1zM206 270h1v1h-1zM253 270h1v1h-1zM319 270h1v1h-1zM449 270h1v1h-1zM482 270h1v1h-1zM515 270h1v1h-1zM526 270h1v1h-1zM562 270h1v1h-1zM586 270h1v1h-1zM633 270h1v1h-1zM699 270h1v1h-1zM25 271h1v1h-1zM76 271h1v1h-1zM158 271h1v1h-1zM169 271h1v1h-1zM174 271h1v1h-1zM194 271h1v1h-1zM214 271h1v1h-1zM219 271h1v1h-1zM230 271h1v1h-1zM287 271h1v1h-1zM312 271h1v1h-1zM363 271h1v1h-1zM405 271h1v1h-1zM456 271h1v1h-1zM538 271h1v1h-1zM549 271h1v1h-1zM554 271h1v1h-1zM574 271h1v1h-1zM594 271h1v1h-1zM599 271h1v1h-1zM610 271h1v1h-1zM667 271h1v1h-1zM692 271h1v1h-1zM743 271h1v1h-1zM83 272h1v1h-1zM138 272h1v1h-1zM243 272h1v1h-1zM250 272h1v1h-1zM305 272h1v1h-1zM463 272h1v1h-1zM518 272h1v1h-1zM623 272h1v1h-1zM630 272h1v1h-1zM685 272h1v1h-1zM89 273h1v1h-1zM101 273h1v1h-1zM141 273h1v1h-1zM145 273h1v1h-1zM162 273h1v1h-1zM172 273h1v1h-1zM216 273h1v1h-1zM226 273h1v1h-1zM247 273h1v1h-1zM299 273h1v1h-1zM469 273h1v1h-1zM481 273h1v1h-1zM521 273h1v1h-1zM525 273h1v1h-1zM542 273h1v1h-1zM552 273h1v1h-1zM596 273h1v1h-1zM606 273h1v1h-1zM627 273h1v1h-1zM679 273h1v1h-1zM25 274h1v1h-1zM184 274h1v1h-1zM204 274h1v1h-1zM244 274h1v1h-1zM287 274h1v1h-1zM363 274h1v1h-1zM405 274h1v1h-1zM564 274h1v1h-1zM584 274h1v1h-1zM624 274h1v1h-1zM667 274h1v1h-1zM743 274h1v1h-1zM95 275h1v1h-1zM165 275h1v1h-1zM170 275h1v1h-1zM193 275h1v1h-1zM218 275h1v1h-1zM223 275h1v1h-1zM293 275h1v1h-1zM475 275h1v1h-1zM545 275h1v1h-1zM550 275h1v1h-1zM573 275h1v1h-1zM598 275h1v1h-1zM603 275h1v1h-1zM673 275h1v1h-1zM100 276h1v1h-1zM106 276h1v1h-1zM144 276h1v1h-1zM150 276h1v1h-1zM190 276h1v1h-1zM196 276h1v1h-1zM199 276h1v1h-1zM238 276h1v1h-1zM282 276h1v1h-1zM480 276h1v1h-1zM486 276h1v1h-1zM524 276h1v1h-1zM530 276h1v1h-1zM570 276h1v1h-1zM576 276h1v1h-1zM579 276h1v1h-1zM618 276h1v1h-1zM662 276h1v1h-1zM25 277h1v1h-1zM111 277h1v1h-1zM188 277h1v1h-1zM202 277h1v1h-1zM245 277h1v1h-1zM277 277h1v1h-1zM288 277h1v1h-1zM363 277h1v1h-1zM405 277h1v1h-1zM491 277h1v1h-1zM568 277h1v1h-1zM582 277h1v1h-1zM625 277h1v1h-1zM657 277h1v1h-1zM668 277h1v1h-1zM743 277h1v1h-1zM116 278h1v1h-1zM155 278h1v1h-1zM168 278h1v1h-1zM185 278h1v1h-1zM220 278h1v1h-1zM233 278h1v1h-1zM272 278h1v1h-1zM496 278h1v1h-1zM535 278h1v1h-1zM548 278h1v1h-1zM565 278h1v1h-1zM600 278h1v1h-1zM613 278h1v1h-1zM652 278h1v1h-1zM100 279h1v1h-1zM120 279h1v1h-1zM143 279h1v1h-1zM159 279h1v1h-1zM204 279h1v1h-1zM229 279h1v1h-1zM268 279h1v1h-1zM480 279h1v1h-1zM500 279h1v1h-1zM523 279h1v1h-1zM539 279h1v1h-1zM584 279h1v1h-1zM609 279h1v1h-1zM648 279h1v1h-1zM24 280h1v1h-1zM124 280h1v1h-1zM128 280h1v1h-1zM167 280h1v1h-1zM172 280h1v1h-1zM183 280h1v1h-1zM216 280h1v1h-1zM221 280h1v1h-1zM246 280h1v1h-1zM260 280h1v1h-1zM264 280h1v1h-1zM288 280h1v1h-1zM364 280h1v1h-1zM404 280h1v1h-1zM504 280h1v1h-1zM508 280h1v1h-1zM547 280h1v1h-1zM552 280h1v1h-1zM563 280h1v1h-1zM596 280h1v1h-1zM601 280h1v1h-1zM626 280h1v1h-1zM640 280h1v1h-1zM644 280h1v1h-1zM668 280h1v1h-1zM744 280h1v1h-1zM132 281h1v1h-1zM163 281h1v1h-1zM206 281h1v1h-1zM225 281h1v1h-1zM256 281h1v1h-1zM512 281h1v1h-1zM543 281h1v1h-1zM586 281h1v1h-1zM605 281h1v1h-1zM636 281h1v1h-1zM100 282h1v1h-1zM135 282h1v1h-1zM139 282h1v1h-1zM142 282h1v1h-1zM176 282h1v1h-1zM181 282h1v1h-1zM212 282h1v1h-1zM249 282h1v1h-1zM253 282h1v1h-1zM480 282h1v1h-1zM515 282h1v1h-1zM519 282h1v1h-1zM522 282h1v1h-1zM556 282h1v1h-1zM561 282h1v1h-1zM592 282h1v1h-1zM629 282h1v1h-1zM633 282h1v1h-1zM24 283h1v1h-1zM166 283h1v1h-1zM193 283h1v1h-1zM196 283h1v1h-1zM222 283h1v1h-1zM246 283h1v1h-1zM289 283h1v1h-1zM364 283h1v1h-1zM404 283h1v1h-1zM546 283h1v1h-1zM573 283h1v1h-1zM576 283h1v1h-1zM602 283h1v1h-1zM626 283h1v1h-1zM669 283h1v1h-1zM744 283h1v1h-1zM148 284h1v1h-1zM190 284h1v1h-1zM199 284h1v1h-1zM208 284h1v1h-1zM240 284h1v1h-1zM528 284h1v1h-1zM570 284h1v1h-1zM579 284h1v1h-1zM588 284h1v1h-1zM620 284h1v1h-1zM99 285h1v1h-1zM142 285h1v1h-1zM153 285h1v1h-1zM179 285h1v1h-1zM188 285h1v1h-1zM235 285h1v1h-1zM479 285h1v1h-1zM522 285h1v1h-1zM533 285h1v1h-1zM559 285h1v1h-1zM568 285h1v1h-1zM615 285h1v1h-1zM24 286h1v1h-1zM157 286h1v1h-1zM161 286h1v1h-1zM165 286h1v1h-1zM201 286h1v1h-1zM209 286h1v1h-1zM223 286h1v1h-1zM227 286h1v1h-1zM231 286h1v1h-1zM247 286h1v1h-1zM289 286h1v1h-1zM364 286h1v1h-1zM404 286h1v1h-1zM537 286h1v1h-1zM541 286h1v1h-1zM545 286h1v1h-1zM581 286h1v1h-1zM589 286h1v1h-1zM603 286h1v1h-1zM607 286h1v1h-1zM611 286h1v1h-1zM627 286h1v1h-1zM669 286h1v1h-1zM744 286h1v1h-1zM99 288h1v1h-1zM141 288h1v1h-1zM178 288h1v1h-1zM186 288h1v1h-1zM479 288h1v1h-1zM521 288h1v1h-1zM558 288h1v1h-1zM566 288h1v1h-1zM24 289h1v1h-1zM165 289h1v1h-1zM203 289h1v1h-1zM210 289h1v1h-1zM223 289h1v1h-1zM247 289h1v1h-1zM289 289h1v1h-1zM364 289h1v1h-1zM404 289h1v1h-1zM545 289h1v1h-1zM583 289h1v1h-1zM590 289h1v1h-1zM603 289h1v1h-1zM627 289h1v1h-1zM669 289h1v1h-1zM744 289h1v1h-1zM141 290h1v1h-1zM185 290h1v1h-1zM521 290h1v1h-1zM565 290h1v1h-1zM99 291h1v1h-1zM178 291h1v1h-1zM479 291h1v1h-1zM558 291h1v1h-1zM24 292h1v1h-1zM34 292h1v1h-1zM43 292h1v1h-1zM59 292h1v1h-1zM67 292h1v1h-1zM74 292h1v1h-1zM81 292h1v1h-1zM87 292h1v1h-1zM93 292h1v1h-1zM104 292h1v1h-1zM110 292h1v1h-1zM114 292h1v1h-1zM119 292h1v1h-1zM123 292h1v1h-1zM127 292h1v1h-1zM131 292h1v1h-1zM134 292h1v1h-1zM138 292h1v1h-1zM147 292h1v1h-1zM152 292h1v1h-1zM157 292h1v1h-1zM161 292h1v1h-1zM164 292h1v1h-1zM169 292h1v1h-1zM173 292h1v1h-1zM203 292h1v1h-1zM211 292h1v1h-1zM215 292h1v1h-1zM219 292h1v1h-1zM224 292h1v1h-1zM227 292h1v1h-1zM231 292h1v1h-1zM236 292h1v1h-1zM241 292h1v1h-1zM247 292h1v1h-1zM250 292h1v1h-1zM254 292h1v1h-1zM257 292h1v1h-1zM261 292h1v1h-1zM265 292h1v1h-1zM269 292h1v1h-1zM274 292h1v1h-1zM278 292h1v1h-1zM284 292h1v1h-1zM289 292h1v1h-1zM295 292h1v1h-1zM301 292h1v1h-1zM307 292h1v1h-1zM314 292h1v1h-1zM321 292h1v1h-1zM329 292h1v1h-1zM345 292h1v1h-1zM354 292h1v1h-1zM364 292h1v1h-1zM404 292h1v1h-1zM414 292h1v1h-1zM423 292h1v1h-1zM439 292h1v1h-1zM447 292h1v1h-1zM454 292h1v1h-1zM461 292h1v1h-1zM467 292h1v1h-1zM473 292h1v1h-1zM484 292h1v1h-1zM490 292h1v1h-1zM494 292h1v1h-1zM499 292h1v1h-1zM503 292h1v1h-1zM507 292h1v1h-1zM511 292h1v1h-1zM514 292h1v1h-1zM518 292h1v1h-1zM527 292h1v1h-1zM532 292h1v1h-1zM537 292h1v1h-1zM541 292h1v1h-1zM544 292h1v1h-1zM549 292h1v1h-1zM553 292h1v1h-1zM583 292h1v1h-1zM591 292h1v1h-1zM595 292h1v1h-1zM599 292h1v1h-1zM604 292h1v1h-1zM607 292h1v1h-1zM611 292h1v1h-1zM616 292h1v1h-1zM621 292h1v1h-1zM627 292h1v1h-1zM630 292h1v1h-1zM634 292h1v1h-1zM637 292h1v1h-1zM641 292h1v1h-1zM645 292h1v1h-1zM649 292h1v1h-1zM654 292h1v1h-1zM658 292h1v1h-1zM664 292h1v1h-1zM669 292h1v1h-1zM675 292h1v1h-1zM681 292h1v1h-1zM687 292h1v1h-1zM694 292h1v1h-1zM701 292h1v1h-1zM709 292h1v1h-1zM725 292h1v1h-1zM734 292h1v1h-1zM744 292h1v1h-1zM99 293h1v1h-1zM178 293h1v1h-1zM141 294h1v1h-1zM185 294h1v1h-1zM24 295h1v1h-1zM165 295h1v1h-1zM203 295h1v1h-1zM210 295h1v1h-1zM223 295h1v1h-1zM247 295h1v1h-1zM289 295h1v1h-1zM364 295h1v1h-1zM99 296h1v1h-1zM141 296h1v1h-1zM178 296h1v1h-1zM186 296h1v1h-1zM24 298h1v1h-1zM157 298h1v1h-1zM161 298h1v1h-1zM165 298h1v1h-1zM201 298h1v1h-1zM209 298h1v1h-1zM223 298h1v1h-1zM227 298h1v1h-1zM231 298h1v1h-1zM247 298h1v1h-1zM289 298h1v1h-1zM364 298h1v1h-1zM99 299h1v1h-1zM142 299h1v1h-1zM153 299h1v1h-1zM179 299h1v1h-1zM188 299h1v1h-1zM235 299h1v1h-1zM148 300h1v1h-1zM190 300h1v1h-1zM199 300h1v1h-1zM208 300h1v1h-1zM240 300h1v1h-1zM24 301h1v1h-1zM166 301h1v1h-1zM193 301h1v1h-1zM196 301h1v1h-1zM222 301h1v1h-1zM246 301h1v1h-1zM289 301h1v1h-1zM364 301h1v1h-1zM100 302h1v1h-1zM135 302h1v1h-1zM139 302h1v1h-1zM142 302h1v1h-1zM176 302h1v1h-1zM181 302h1v1h-1zM212 302h1v1h-1zM249 302h1v1h-1zM253 302h1v1h-1zM132 303h1v1h-1zM163 303h1v1h-1zM206 303h1v1h-1zM225 303h1v1h-1zM256 303h1v1h-1zM24 304h1v1h-1zM124 304h1v1h-1zM128 304h1v1h-1zM167 304h1v1h-1zM172 304h1v1h-1zM183 304h1v1h-1zM216 304h1v1h-1zM221 304h1v1h-1zM246 304h1v1h-1zM260 304h1v1h-1zM264 304h1v1h-1zM288 304h1v1h-1zM364 304h1v1h-1zM100 305h1v1h-1zM120 305h1v1h-1zM143 305h1v1h-1zM159 305h1v1h-1zM204 305h1v1h-1zM229 305h1v1h-1zM268 305h1v1h-1zM116 306h1v1h-1zM155 306h1v1h-1zM168 306h1v1h-1zM185 306h1v1h-1zM220 306h1v1h-1zM233 306h1v1h-1zM272 306h1v1h-1zM25 307h1v1h-1zM111 307h1v1h-1zM188 307h1v1h-1zM202 307h1v1h-1zM245 307h1v1h-1zM277 307h1v1h-1zM288 307h1v1h-1zM363 307h1v1h-1zM100 308h1v1h-1zM106 308h1v1h-1zM144 308h1v1h-1zM150 308h1v1h-1zM190 308h1v1h-1zM196 308h1v1h-1zM199 308h1v1h-1zM238 308h1v1h-1zM282 308h1v1h-1zM95 309h1v1h-1zM165 309h1v1h-1zM170 309h1v1h-1zM193 309h1v1h-1zM218 309h1v1h-1zM223 309h1v1h-1zM293 309h1v1h-1zM25 310h1v1h-1zM184 310h1v1h-1zM204 310h1v1h-1zM244 310h1v1h-1zM287 310h1v1h-1zM363 310h1v1h-1zM89 311h1v1h-1zM101 311h1v1h-1zM141 311h1v1h-1zM145 311h1v1h-1zM162 311h1v1h-1zM172 311h1v1h-1zM216 311h1v1h-1zM226 311h1v1h-1zM247 311h1v1h-1zM299 311h1v1h-1zM83 312h1v1h-1zM138 312h1v1h-1zM243 312h1v1h-1zM250 312h1v1h-1zM305 312h1v1h-1zM25 313h1v1h-1zM76 313h1v1h-1zM158 313h1v1h-1zM169 313h1v1h-1zM174 313h1v1h-1zM194 313h1v1h-1zM214 313h1v1h-1zM219 313h1v1h-1zM230 313h1v1h-1zM287 313h1v1h-1zM312 313h1v1h-1zM363 313h1v1h-1zM69 314h1v1h-1zM102 314h1v1h-1zM135 314h1v1h-1zM146 314h1v1h-1zM182 314h1v1h-1zM206 314h1v1h-1zM253 314h1v1h-1zM319 314h1v1h-1zM61 315h1v1h-1zM131 315h1v1h-1zM176 315h1v1h-1zM212 315h1v1h-1zM242 315h1v1h-1zM257 315h1v1h-1zM327 315h1v1h-1zM26 316h1v1h-1zM127 316h1v1h-1zM153 316h1v1h-1zM165 316h1v1h-1zM223 316h1v1h-1zM235 316h1v1h-1zM261 316h1v1h-1zM286 316h1v1h-1zM362 316h1v1h-1zM102 317h1v1h-1zM147 317h1v1h-1zM173 317h1v1h-1zM178 317h1v1h-1zM194 317h1v1h-1zM210 317h1v1h-1zM215 317h1v1h-1zM45 318h1v1h-1zM123 318h1v1h-1zM240 318h1v1h-1zM265 318h1v1h-1zM343 318h1v1h-1zM26 319h1v1h-1zM119 319h1v1h-1zM148 319h1v1h-1zM162 319h1v1h-1zM181 319h1v1h-1zM207 319h1v1h-1zM226 319h1v1h-1zM269 319h1v1h-1zM285 319h1v1h-1zM362 319h1v1h-1zM36 320h1v1h-1zM103 320h1v1h-1zM145 320h1v1h-1zM184 320h1v1h-1zM204 320h1v1h-1zM239 320h1v1h-1zM243 320h1v1h-1zM352 320h1v1h-1zM115 321h1v1h-1zM170 321h1v1h-1zM177 321h1v1h-1zM187 321h1v1h-1zM190 321h1v1h-1zM198 321h1v1h-1zM201 321h1v1h-1zM211 321h1v1h-1zM218 321h1v1h-1zM273 321h1v1h-1zM284 321h1v1h-1zM27 322h1v1h-1zM142 322h1v1h-1zM150 322h1v1h-1zM158 322h1v1h-1zM193 322h1v1h-1zM195 322h1v1h-1zM230 322h1v1h-1zM246 322h1v1h-1zM361 322h1v1h-1zM104 323h1v1h-1zM110 323h1v1h-1zM183 323h1v1h-1zM205 323h1v1h-1zM237 323h1v1h-1zM278 323h1v1h-1zM139 324h1v1h-1zM152 324h1v1h-1zM167 324h1v1h-1zM175 324h1v1h-1zM213 324h1v1h-1zM221 324h1v1h-1zM249 324h1v1h-1zM283 324h1v1h-1zM27 325h1v1h-1zM136 325h1v1h-1zM188 325h1v1h-1zM194 325h1v1h-1zM200 325h1v1h-1zM235 325h1v1h-1zM252 325h1v1h-1zM361 325h1v1h-1zM99 326h1v1h-1zM105 326h1v1h-1zM154 326h1v1h-1zM289 326h1v1h-1zM133 327h1v1h-1zM181 327h1v1h-1zM207 327h1v1h-1zM255 327h1v1h-1zM282 327h1v1h-1zM28 328h1v1h-1zM94 328h1v1h-1zM151 328h1v1h-1zM164 328h1v1h-1zM173 328h1v1h-1zM215 328h1v1h-1zM224 328h1v1h-1zM233 328h1v1h-1zM237 328h1v1h-1zM294 328h1v1h-1zM360 328h1v1h-1zM106 329h1v1h-1zM156 329h1v1h-1zM188 329h1v1h-1zM194 329h1v1h-1zM200 329h1v1h-1zM129 330h1v1h-1zM148 330h1v1h-1zM231 330h1v1h-1zM240 330h1v1h-1zM259 330h1v1h-1zM281 330h1v1h-1zM28 331h1v1h-1zM88 331h1v1h-1zM108 331h1v1h-1zM158 331h1v1h-1zM180 331h1v1h-1zM208 331h1v1h-1zM300 331h1v1h-1zM360 331h1v1h-1zM125 332h1v1h-1zM229 332h1v1h-1zM263 332h1v1h-1zM81 333h1v1h-1zM146 333h1v1h-1zM160 333h1v1h-1zM170 333h1v1h-1zM187 333h1v1h-1zM201 333h1v1h-1zM218 333h1v1h-1zM242 333h1v1h-1zM280 333h1v1h-1zM307 333h1v1h-1zM29 334h1v1h-1zM109 334h1v1h-1zM121 334h1v1h-1zM194 334h1v1h-1zM227 334h1v1h-1zM267 334h1v1h-1zM359 334h1v1h-1zM75 335h1v1h-1zM143 335h1v1h-1zM158 335h1v1h-1zM162 335h1v1h-1zM224 335h1v1h-1zM230 335h1v1h-1zM245 335h1v1h-1zM278 335h1v1h-1zM313 335h1v1h-1zM30 336h1v1h-1zM165 336h1v1h-1zM178 336h1v1h-1zM210 336h1v1h-1zM358 336h1v1h-1zM110 337h1v1h-1zM116 337h1v1h-1zM222 337h1v1h-1zM272 337h1v1h-1zM67 338h1v1h-1zM140 338h1v1h-1zM156 338h1v1h-1zM167 338h1v1h-1zM186 338h1v1h-1zM202 338h1v1h-1zM232 338h1v1h-1zM248 338h1v1h-1zM277 338h1v1h-1zM321 338h1v1h-1zM31 339h1v1h-1zM112 339h1v1h-1zM170 339h1v1h-1zM194 339h1v1h-1zM219 339h1v1h-1zM357 339h1v1h-1zM136 340h1v1h-1zM153 340h1v1h-1zM217 340h1v1h-1zM235 340h1v1h-1zM252 340h1v1h-1zM166 341h1v1h-1zM173 341h1v1h-1zM214 341h1v1h-1zM222 341h1v1h-1zM276 341h1v1h-1zM32 342h1v1h-1zM107 342h1v1h-1zM113 342h1v1h-1zM176 342h1v1h-1zM211 342h1v1h-1zM281 342h1v1h-1zM356 342h1v1h-1zM133 343h1v1h-1zM151 343h1v1h-1zM178 343h1v1h-1zM181 343h1v1h-1zM208 343h1v1h-1zM237 343h1v1h-1zM255 343h1v1h-1zM274 343h1v1h-1zM52 344h1v1h-1zM115 344h1v1h-1zM164 344h1v1h-1zM184 344h1v1h-1zM202 344h1v1h-1zM205 344h1v1h-1zM224 344h1v1h-1zM336 344h1v1h-1zM33 345h1v1h-1zM102 345h1v1h-1zM175 345h1v1h-1zM187 345h1v1h-1zM190 345h1v1h-1zM193 345h1v1h-1zM196 345h1v1h-1zM199 345h1v1h-1zM213 345h1v1h-1zM286 345h1v1h-1zM355 345h1v1h-1zM129 346h1v1h-1zM148 346h1v1h-1zM240 346h1v1h-1zM259 346h1v1h-1zM272 346h1v1h-1zM43 347h1v1h-1zM117 347h1v1h-1zM162 347h1v1h-1zM184 347h1v1h-1zM204 347h1v1h-1zM226 347h1v1h-1zM345 347h1v1h-1zM33 348h1v1h-1zM174 348h1v1h-1zM194 348h1v1h-1zM214 348h1v1h-1zM271 348h1v1h-1zM355 348h1v1h-1zM96 349h1v1h-1zM118 349h1v1h-1zM292 349h1v1h-1zM125 350h1v1h-1zM146 350h1v1h-1zM161 350h1v1h-1zM227 350h1v1h-1zM242 350h1v1h-1zM263 350h1v1h-1zM269 350h1v1h-1zM34 351h1v1h-1zM172 351h1v1h-1zM184 351h1v1h-1zM204 351h1v1h-1zM216 351h1v1h-1zM354 351h1v1h-1zM90 352h1v1h-1zM120 352h1v1h-1zM194 352h1v1h-1zM298 352h1v1h-1zM143 353h1v1h-1zM159 353h1v1h-1zM229 353h1v1h-1zM245 353h1v1h-1zM267 353h1v1h-1zM36 354h1v1h-1zM122 354h1v1h-1zM183 354h1v1h-1zM205 354h1v1h-1zM352 354h1v1h-1zM171 355h1v1h-1zM194 355h1v1h-1zM217 355h1v1h-1zM265 355h1v1h-1zM37 356h1v1h-1zM84 356h1v1h-1zM124 356h1v1h-1zM304 356h1v1h-1zM351 356h1v1h-1zM117 357h1v1h-1zM140 357h1v1h-1zM156 357h1v1h-1zM232 357h1v1h-1zM248 357h1v1h-1zM263 357h1v1h-1zM271 357h1v1h-1zM126 358h1v1h-1zM182 358h1v1h-1zM206 358h1v1h-1zM38 359h1v1h-1zM77 359h1v1h-1zM170 359h1v1h-1zM194 359h1v1h-1zM218 359h1v1h-1zM261 359h1v1h-1zM311 359h1v1h-1zM350 359h1v1h-1zM128 360h1v1h-1zM112 361h1v1h-1zM136 361h1v1h-1zM154 361h1v1h-1zM234 361h1v1h-1zM252 361h1v1h-1zM259 361h1v1h-1zM276 361h1v1h-1zM39 362h1v1h-1zM130 362h1v1h-1zM182 362h1v1h-1zM206 362h1v1h-1zM349 362h1v1h-1zM168 363h1v1h-1zM194 363h1v1h-1zM220 363h1v1h-1zM256 363h1v1h-1zM133 364h1v1h-1zM40 365h1v1h-1zM107 365h1v1h-1zM152 365h1v1h-1zM236 365h1v1h-1zM254 365h1v1h-1zM281 365h1v1h-1zM348 365h1v1h-1zM135 366h1v1h-1zM181 366h1v1h-1zM207 366h1v1h-1zM42 367h1v1h-1zM167 367h1v1h-1zM194 367h1v1h-1zM221 367h1v1h-1zM252 367h1v1h-1zM346 367h1v1h-1zM63 368h1v1h-1zM137 368h1v1h-1zM325 368h1v1h-1zM102 369h1v1h-1zM129 369h1v1h-1zM249 369h1v1h-1zM259 369h1v1h-1zM286 369h1v1h-1zM43 370h1v1h-1zM140 370h1v1h-1zM149 370h1v1h-1zM180 370h1v1h-1zM208 370h1v1h-1zM239 370h1v1h-1zM345 370h1v1h-1zM165 371h1v1h-1zM223 371h1v1h-1zM247 371h1v1h-1zM55 372h1v1h-1zM142 372h1v1h-1zM194 372h1v1h-1zM244 372h1v1h-1zM333 372h1v1h-1zM44 373h1v1h-1zM145 373h1v1h-1zM344 373h1v1h-1zM97 374h1v1h-1zM125 374h1v1h-1zM242 374h1v1h-1zM263 374h1v1h-1zM291 374h1v1h-1zM46 375h1v1h-1zM147 375h1v1h-1zM179 375h1v1h-1zM209 375h1v1h-1zM239 375h1v1h-1zM342 375h1v1h-1zM150 376h1v1h-1zM163 376h1v1h-1zM194 376h1v1h-1zM225 376h1v1h-1zM153 377h1v1h-1zM237 377h1v1h-1zM47 378h1v1h-1zM234 378h1v1h-1zM341 378h1v1h-1zM91 379h1v1h-1zM121 379h1v1h-1zM144 379h1v1h-1zM155 379h1v1h-1zM231 379h1v1h-1zM244 379h1v1h-1zM267 379h1v1h-1zM297 379h1v1h-1zM49 380h1v1h-1zM158 380h1v1h-1zM178 380h1v1h-1zM210 380h1v1h-1zM228 380h1v1h-1zM339 380h1v1h-1zM161 381h1v1h-1zM164 382h1v1h-1zM194 382h1v1h-1zM223 382h1v1h-1zM226 382h1v1h-1zM50 383h1v1h-1zM167 383h1v1h-1zM220 383h1v1h-1zM338 383h1v1h-1zM117 384h1v1h-1zM141 384h1v1h-1zM170 384h1v1h-1zM172 384h1v1h-1zM217 384h1v1h-1zM247 384h1v1h-1zM271 384h1v1h-1zM175 385h1v1h-1zM211 385h1v1h-1zM214 385h1v1h-1zM52 386h1v1h-1zM178 386h1v1h-1zM181 386h1v1h-1zM184 386h1v1h-1zM205 386h1v1h-1zM208 386h1v1h-1zM336 386h1v1h-1zM160 387h1v1h-1zM187 387h1v1h-1zM190 387h1v1h-1zM193 387h1v1h-1zM196 387h1v1h-1zM199 387h1v1h-1zM202 387h1v1h-1zM228 387h1v1h-1zM54 388h1v1h-1zM334 388h1v1h-1zM78 389h1v1h-1zM112 389h1v1h-1zM276 389h1v1h-1zM310 389h1v1h-1zM55 390h1v1h-1zM137 390h1v1h-1zM251 390h1v1h-1zM333 390h1v1h-1zM177 391h1v1h-1zM211 391h1v1h-1zM158 392h1v1h-1zM230 392h1v1h-1zM57 393h1v1h-1zM194 393h1v1h-1zM331 393h1v1h-1zM59 395h1v1h-1zM71 395h1v1h-1zM107 395h1v1h-1zM281 395h1v1h-1zM317 395h1v1h-1zM329 395h1v1h-1zM134 396h1v1h-1zM254 396h1v1h-1zM175 397h1v1h-1zM213 397h1v1h-1zM61 398h1v1h-1zM155 398h1v1h-1zM233 398h1v1h-1zM327 398h1v1h-1zM194 399h1v1h-1zM63 400h1v1h-1zM325 400h1v1h-1zM65 402h1v1h-1zM130 402h1v1h-1zM258 402h1v1h-1zM323 402h1v1h-1zM174 403h1v1h-1zM214 403h1v1h-1zM67 405h1v1h-1zM153 405h1v1h-1zM194 405h1v1h-1zM235 405h1v1h-1zM321 405h1v1h-1zM69 407h1v1h-1zM319 407h1v1h-1zM97 408h1v1h-1zM291 408h1v1h-1zM71 409h1v1h-1zM127 409h1v1h-1zM261 409h1v1h-1zM317 409h1v1h-1zM173 410h1v1h-1zM215 410h1v1h-1zM73 411h1v1h-1zM151 411h1v1h-1zM237 411h1v1h-1zM315 411h1v1h-1zM194 412h1v1h-1zM75 413h1v1h-1zM313 413h1v1h-1zM77 415h1v1h-1zM91 415h1v1h-1zM297 415h1v1h-1zM311 415h1v1h-1zM79 417h1v1h-1zM172 417h1v1h-1zM216 417h1v1h-1zM309 417h1v1h-1zM81 419h1v1h-1zM148 419h1v1h-1zM194 419h1v1h-1zM240 419h1v1h-1zM307 419h1v1h-1zM84 421h1v1h-1zM304 421h1v1h-1zM86 423h1v1h-1zM118 423h1v1h-1zM270 423h1v1h-1zM302 423h1v1h-1zM88 425h1v1h-1zM171 425h1v1h-1zM217 425h1v1h-1zM300 425h1v1h-1zM91 427h1v1h-1zM194 427h1v1h-1zM297 427h1v1h-1zM93 429h1v1h-1zM295 429h1v1h-1zM96 431h1v1h-1zM114 431h1v1h-1zM274 431h1v1h-1zM292 431h1v1h-1zM98 432h1v1h-1zM290 432h1v1h-1zM100 434h1v1h-1zM142 434h1v1h-1zM246 434h1v1h-1zM288 434h1v1h-1zM103 436h1v1h-1zM285 436h1v1h-1zM106 437h1v1h-1zM282 437h1v1h-1zM108 439h1v1h-1zM280 439h1v1h-1zM111 440h1v1h-1zM277 440h1v1h-1zM168 441h1v1h-1zM220 441h1v1h-1zM113 442h1v1h-1zM275 442h1v1h-1zM116 443h1v1h-1zM139 443h1v1h-1zM194 443h1v1h-1zM249 443h1v1h-1zM272 443h1v1h-1zM119 444h1v1h-1zM269 444h1v1h-1zM121 446h1v1h-1zM267 446h1v1h-1zM124 447h1v1h-1zM264 447h1v1h-1zM127 448h1v1h-1zM261 448h1v1h-1zM130 449h1v1h-1zM258 449h1v1h-1zM132 450h1v1h-1zM166 450h1v1h-1zM222 450h1v1h-1zM256 450h1v1h-1zM135 452h1v1h-1zM194 452h1v1h-1zM253 452h1v1h-1zM138 453h1v1h-1zM141 453h1v1h-1zM247 453h1v1h-1zM250 453h1v1h-1zM144 454h1v1h-1zM244 454h1v1h-1zM147 455h1v1h-1zM241 455h1v1h-1zM150 456h1v1h-1zM238 456h1v1h-1zM152 457h1v1h-1zM236 457h1v1h-1zM155 458h1v1h-1zM158 458h1v1h-1zM230 458h1v1h-1zM233 458h1v1h-1zM161 459h1v1h-1zM164 459h1v1h-1zM224 459h1v1h-1zM227 459h1v1h-1zM167 460h1v1h-1zM170 460h1v1h-1zM218 460h1v1h-1zM221 460h1v1h-1zM173 461h1v1h-1zM176 461h1v1h-1zM179 461h1v1h-1zM209 461h1v1h-1zM212 461h1v1h-1zM215 461h1v1h-1zM182 462h1v1h-1zM185 462h1v1h-1zM188 462h1v1h-1zM191 462h1v1h-1zM194 462h1v1h-1zM197 462h1v1h-1zM200 462h1v1h-1zM203 462h1v1h-1zM206 462h1v1h-1z" fill="#000"/>
<path d="M188 149h1v1h-1zM193 149h1v1h-1zM198 149h1v1h-1zM568 149h1v1h-1zM573 149h1v1h-1zM578 149h1v1h-1zM178 150h1v1h-1zM183 150h1v1h-1zM203 150h1v1h-1zM208 150h1v1h-1zM213 150h1v1h-1zM558 150h1v1h-1zM563 150h1v1h-1zM583 150h1v1h-1zM588 150h1v1h-1zM593 150h1v1h-1zM173 151h1v1h-1zM218 151h1v1h-1zM553 151h1v1h-1zM598 151h1v1h-1zM168 152h1v1h-1zM223 152h1v1h-1zM548 152h1v1h-1zM603 152h1v1h-1zM163 153h1v1h-1zM228 153h1v1h-1zM543 153h1v1h-1zM608 153h1v1h-1zM158 154h1v1h-1zM538 154h1v1h-1zM153 155h1v1h-1zM232 155h1v1h-1zM533 155h1v1h-1zM612 155h1v1h-1zM237 156h1v1h-1zM617 156h1v1h-1zM148 157h1v1h-1zM528 157h1v1h-1zM144 158h1v1h-1zM242 158h1v1h-1zM524 158h1v1h-1zM622 158h1v1h-1zM247 159h1v1h-1zM627 159h1v1h-1zM139 160h1v1h-1zM519 160h1v1h-1zM251 161h1v1h-1zM631 161h1v1h-1zM134 162h1v1h-1zM514 162h1v1h-1zM256 163h1v1h-1zM636 163h1v1h-1zM130 164h1v1h-1zM510 164h1v1h-1zM260 166h1v1h-1zM640 166h1v1h-1zM126 167h1v1h-1zM506 167h1v1h-1zM265 168h1v1h-1zM645 168h1v1h-1zM121 169h1v1h-1zM501 169h1v1h-1zM269 171h1v1h-1zM649 171h1v1h-1zM117 172h1v1h-1zM497 172h1v1h-1zM273 173h1v1h-1zM653 173h1v1h-1zM113 175h1v1h-1zM493 175h1v1h-1zM277 176h1v1h-1zM657 176h1v1h-1zM109 178h1v1h-1zM489 178h1v1h-1zM281 179h1v1h-1zM661 179h1v1h-1zM105 181h1v1h-1zM485 181h1v1h-1zM285 182h1v1h-1zM665 182h1v1h-1zM101 184h1v1h-1zM481 184h1v1h-1zM289 185h1v1h-1zM669 185h1v1h-1zM97 187h1v1h-1zM477 187h1v1h-1zM293 189h1v1h-1zM673 189h1v1h-1zM94 191h1v1h-1zM474 191h1v1h-1zM296 192h1v1h-1zM676 192h1v1h-1zM90 194h1v1h-1zM470 194h1v1h-1zM300 196h1v1h-1zM680 196h1v1h-1zM87 198h1v1h-1zM467 198h1v1h-1zM303 200h1v1h-1zM683 200h1v1h-1zM83 202h1v1h-1zM463 202h1v1h-1zM306 204h1v1h-1zM686 204h1v1h-1zM80 206h1v1h-1zM460 206h1v1h-1zM309 208h1v1h-1zM689 208h1v1h-1zM77 210h1v1h-1zM457 210h1v1h-1zM312 212h1v1h-1zM692 212h1v1h-1zM75 214h1v1h-1zM455 214h1v1h-1zM315 216h1v1h-1zM695 216h1v1h-1zM72 218h1v1h-1zM452 218h1v1h-1zM317 220h1v1h-1zM697 220h1v1h-1zM69 222h1v1h-1zM449 222h1v1h-1zM320 225h1v1h-1zM700 225h1v1h-1zM67 227h1v1h-1zM447 227h1v1h-1zM322 229h1v1h-1zM702 229h1v1h-1zM65 231h1v1h-1zM445 231h1v1h-1zM324 234h1v1h-1zM704 234h1v1h-1zM63 236h1v1h-1zM443 236h1v1h-1zM326 238h1v1h-1zM706 238h1v1h-1zM61 241h1v1h-1zM441 241h1v1h-1zM328 243h1v1h-1zM708 243h1v1h-1zM59 245h1v1h-1zM439 245h1v1h-1zM330 248h1v1h-1zM710 248h1v1h-1zM58 250h1v1h-1zM438 250h1v1h-1zM331 252h1v1h-1zM711 252h1v1h-1zM56 255h1v1h-1zM436 255h1v1h-1zM332 257h1v1h-1zM712 257h1v1h-1zM55 260h1v1h-1zM435 260h1v1h-1zM334 262h1v1h-1zM714 262h1v1h-1zM54 265h1v1h-1zM434 265h1v1h-1zM335 267h1v1h-1zM715 267h1v1h-1zM53 270h1v1h-1zM433 270h1v1h-1zM335 272h1v1h-1zM715 272h1v1h-1zM52 275h1v1h-1zM432 275h1v1h-1zM336 277h1v1h-1zM716 277h1v1h-1zM52 279h1v1h-1zM432 279h1v1h-1zM336 282h1v1h-1zM716 282h1v1h-1zM51 284h1v1h-1zM431 284h1v1h-1zM337 287h1v1h-1zM717 287h1v1h-1zM51 289h1v1h-1zM431 289h1v1h-1zM337 292h1v1h-1zM717 292h1v1h-1zM51 295h1v1h-1zM337 297h1v1h-1zM51 300h1v1h-1zM336 302h1v1h-1zM52 305h1v1h-1zM336 307h1v1h-1zM52 309h1v1h-1zM335 312h1v1h-1zM53 314h1v1h-1zM335 317h1v1h-1zM54 319h1v1h-1zM334 322h1v1h-1zM55 324h1v1h-1zM332 327h1v1h-1zM56 329h1v1h-1zM331 332h1v1h-1zM58 334h1v1h-1zM330 336h1v1h-1zM59 339h1v1h-1zM328 341h1v1h-1zM61 343h1v1h-1zM326 346h1v1h-1zM63 348h1v1h-1zM324 350h1v1h-1zM65 353h1v1h-1zM322 355h1v1h-1zM67 357h1v1h-1zM320 359h1v1h-1zM69 362h1v1h-1zM317 364h1v1h-1zM72 366h1v1h-1zM315 368h1v1h-1zM75 370h1v1h-1zM312 372h1v1h-1zM77 374h1v1h-1zM309 376h1v1h-1zM80 378h1v1h-1zM306 380h1v1h-1zM83 382h1v1h-1zM303 384h1v1h-1zM87 386h1v1h-1zM300 388h1v1h-1zM90 390h1v1h-1zM296 392h1v1h-1zM94 393h1v1h-1zM293 395h1v1h-1zM97 397h1v1h-1zM289 399h1v1h-1zM101 400h1v1h-1zM285 402h1v1h-1zM105 403h1v1h-1zM281 405h1v1h-1zM109 406h1v1h-1zM277 408h1v1h-1zM113 409h1v1h-1zM273 411h1v1h-1zM117 412h1v1h-1zM269 413h1v1h-1zM121 415h1v1h-1zM265 416h1v1h-1zM126 417h1v1h-1zM260 418h1v1h-1zM130 420h1v1h-1zM256 421h1v1h-1zM134 422h1v1h-1zM251 423h1v1h-1zM139 424h1v1h-1zM247 425h1v1h-1zM144 426h1v1h-1zM242 426h1v1h-1zM148 427h1v1h-1zM237 428h1v1h-1zM153 429h1v1h-1zM232 429h1v1h-1zM158 430h1v1h-1zM163 431h1v1h-1zM228 431h1v1h-1zM168 432h1v1h-1zM223 432h1v1h-1zM173 433h1v1h-1zM218 433h1v1h-1zM178 434h1v1h-1zM183 434h1v1h-1zM203 434h1v1h-1zM208 434h1v1h-1zM213 434h1v1h-1zM188 435h1v1h-1zM193 435h1v1h-1zM198 435h1v1h-1z" fill="#f00"/>
</svg>
<svg class="a" style="left:0;top:0" width="770" height="556" viewBox="0 0 770 556" shape-rendering="crispEdges">
<path d="M194.5 368.3 193.7 368.2 192.5 368.0 191.0 368.0 189.2 368.3 186.9 369.1 184.0 370.1 180.9 371.2 177.5 372.4 173.9 373.7 169.8 375.1 165.7 376.4 161.9 377.5 158.4 378.6 155.3 379.7 152.3 380.6 149.3 381.2 146.3 381.5 143.5 381.6 140.7 381.5 137.8 381.5 134.8 381.4 131.7 381.4 128.5 381.2 125.4 380.9 122.4 380.5 119.3 379.9 116.3 379.2 113.1 378.3 109.7 377.3 106.2 376.1 102.7 374.8 99.4 373.5 96.3 372.1 93.4 370.6 90.5 369.1 87.6 367.4 84.6 365.3 81.6 363.0 78.7 360.5 76.0 358.2 73.5 356.0 71.2 353.9 68.9 351.8 66.6 349.4 64.3 347.0 62.2 344.4 59.9 341.6 57.4 338.4 54.5 334.6 51.4 330.4 48.4 325.9 45.8 321.4 43.5 316.8 41.5 312.0 39.8 307.5 38.4 303.4 37.3 300.5 36.5 298.5 35.8 296.2 35.0 292.5 34.2 286.7 33.6 279.5 33.4 271.7 33.7 264.1 34.3 257.0 35.4 249.8 36.8 242.7 38.5 235.7 40.5 228.8 42.8 221.9 45.4 215.3 48.2 209.1 51.2 203.6 54.2 198.6 57.5 193.7 61.3 188.5 65.8 182.9 70.8 177.2 76.4 171.6 82.5 165.9 89.3 160.2 96.9 154.6 104.8 149.3 112.6 144.8 120.3 140.9 127.9 137.5 135.4 134.7 142.5 132.3 148.9 130.5 154.8 129.0 160.6 127.8 166.8 126.7 173.5 125.8 180.4 125.1 187.5 124.7 194.5 124.6 201.5 124.7 208.6 125.1 215.5 125.8 222.2 126.7 228.4 127.8 234.2 129.0 240.1 130.5 246.5 132.3 253.6 134.7 261.1 137.5 268.7 140.9 276.4 144.8 284.2 149.3 292.1 154.6 299.7 160.2 306.5 165.9 312.6 171.6 318.2 177.2 323.2 182.9 327.7 188.5 331.5 193.7 334.8 198.6 337.8 203.6 340.8 209.1 343.6 215.3 346.2 221.9 348.5 228.8 350.5 235.7 352.2 242.7 353.6 249.8 354.7 257.0 355.3 264.1 355.6 271.7 355.4 279.5 354.8 286.7 354.0 292.5 353.2 296.2 352.5 298.5 351.7 300.5 350.6 303.4 349.2 307.5 347.5 312.0 345.5 316.8 343.2 321.4 340.6 325.9 337.6 330.4 334.5 334.6 331.6 338.4 329.1 341.6 326.8 344.4 324.7 347.0 322.4 349.4 320.1 351.8 317.8 353.9 315.5 356.0 313.0 358.2 310.3 360.5 307.4 363.0 304.4 365.3 301.4 367.4 298.5 369.1 295.6 370.6 292.7 372.1 289.6 373.5 286.3 374.8 282.8 376.1 279.3 377.3 275.9 378.3 272.7 379.2 269.7 379.9 266.6 380.5 263.6 380.9 260.5 381.2 257.3 381.4 254.2 381.4 251.2 381.5 248.3 381.5 245.5 381.6 242.7 381.5 239.7 381.2 236.7 380.6 233.7 379.7 230.6 378.6 227.1 377.5 223.3 376.4 219.2 375.1 215.1 373.7 211.5 372.4 208.1 371.2 205.0 370.1 202.1 369.1 199.8 368.3 198.0 368.0 196.5 368.0 195.3 368.2 194.5 368.3z" fill="none" stroke="#000" stroke-width="1"/>
<path d="M588.3 292.1 593.3 291.9 600.6 291.7 609.1 291.5 619.0 291.4 630.1 291.4 640.3 291.1 648.6 290.5 655.9 289.6 663.2 288.4 671.0 287.0 678.7 285.4 686.0 283.2 692.8 280.1 699.2 276.4 704.7 272.8 708.9 269.7 712.2 266.6 715.1 263.4 718.0 259.9 720.5 256.1 722.4 252.0 723.6 247.2 724.2 242.0 724.5 237.4 724.5 234.1 724.1 231.3 723.6 228.0 723.0 223.6 722.1 218.6 721.0 214.0 719.5 210.2 717.7 206.7 715.5 203.0 712.8 198.6 709.7 194.0 706.4 189.5 702.9 185.2 699.2 181.0 695.5 177.0 691.8 173.1 688.0 169.5 684.5 166.2 681.5 163.6 678.7 161.4 675.5 159.0 671.5 156.0 667.1 152.9 662.7 150.0 658.4 147.7 654.1 145.7 650.0 143.8 646.4 142.1 643.1 140.5 639.1 139.0 634.1 137.4 628.5 135.8 622.7 134.5 616.9 133.5 611.0 132.9 605.0 132.6 598.7 132.8 592.4 133.5 587.0 134.2 583.0 134.9 580.0 135.8 577.2 136.7 574.6 137.7 572.2 138.8 569.7 140.1 566.8 141.6 563.9 143.3 561.0 145.0 558.4 146.7 556.0 148.4 553.5 150.4 550.9 152.9 548.4 155.8 545.9 158.5 543.6 160.9 541.4 163.1 539.4 165.5 537.5 168.0 535.7 170.7 534.0 173.6 532.5 176.7 531.0 180.1 529.7 184.4 528.3 190.1 527.1 196.6 526.3 203.0 526.2 209.0 526.7 214.8 527.6 220.7 528.9 226.6 530.6 232.4 532.6 238.3 535.0 244.5 537.8 250.7 540.6 256.2 543.5 261.0 546.5 265.0 548.5 267.8" fill="none" stroke="#000" stroke-width="1"/>
<path d="M548.5 267.8 547.0 267.0 544.7 265.9 542.3 264.7 539.9 263.7 537.2 262.6 534.5 261.4 531.6 259.9 528.6 258.3 525.5 256.9 522.4 256.0 519.3 255.4 516.4 254.9 513.8 254.5 511.2 254.3 508.6 254.3 505.6 254.5 502.4 254.9 499.5 255.6 497.0 256.7 494.9 258.0 493.0 259.5 491.4 261.1 490.1 262.9 489.1 264.7 488.4 266.4 488.1 268.2 488.0 269.9 488.3 271.6 488.8 273.4 489.7 275.1 490.9 276.9 492.5 278.6 494.3 280.3 496.1 281.9 498.2 283.4 500.8 284.8 504.3 286.2 508.3 287.5 512.5 288.7 516.9 289.7 521.5 290.6 525.5 291.3 527.7 291.8 529.3 292.0 533.2 292.2 542.2 292.3 553.6 292.2 561.8 292.2" fill="none" stroke="#000" stroke-width="1"/>
<path d="M588 292.5h21" fill="none" stroke="#000" stroke-width="1"/>
</svg>
<div class="t" style="left:191px;top:115px;font-size:14px;transform-origin:0 0;transform:scaleX(0.9500)">0</div>
<div class="t" style="left:187px;top:142px;font-size:14px;transform-origin:0 0;transform:scaleX(0.9500)">-3</div>
<div class="t" style="left:183px;top:189px;font-size:14px;transform-origin:0 0;transform:scaleX(0.9500)">-10</div>
<div class="t" style="left:183px;top:232px;font-size:14px;transform-origin:0 0;transform:scaleX(0.9500)">-20</div>
<div class="t" style="left:183px;top:255px;font-size:14px;transform-origin:0 0;transform:scaleX(0.9500)">-30</div>
<div class="t" style="left:183px;top:268px;font-size:14px;transform-origin:0 0;transform:scaleX(0.9500)">-40</div>
<div class="t" style="left:571px;top:115px;font-size:14px;transform-origin:0 0;transform:scaleX(0.9500)">0</div>
<div class="t" style="left:567px;top:142px;font-size:14px;transform-origin:0 0;transform:scaleX(0.9500)">-3</div>
<div class="t" style="left:563px;top:189px;font-size:14px;transform-origin:0 0;transform:scaleX(0.9500)">-10</div>
<div class="t" style="left:563px;top:232px;font-size:14px;transform-origin:0 0;transform:scaleX(0.9500)">-20</div>
<div class="t" style="left:563px;top:255px;font-size:14px;transform-origin:0 0;transform:scaleX(0.9500)">-30</div>
<div class="t" style="left:563px;top:268px;font-size:14px;transform-origin:0 0;transform:scaleX(0.9500)">-40</div>
<div class="t" style="left:190px;top:105px;font-size:14px;transform-origin:0 0;transform:scaleX(0.9500)">X</div>
<div class="t" style="left:13px;top:285px;font-size:14px;transform-origin:0 0;transform:scaleX(0.9500)">Y</div>
<div class="t" style="left:570px;top:105px;font-size:14px;transform-origin:0 0;transform:scaleX(0.9500)">Z</div>
<div class="t" style="left:745px;top:285px;font-size:14px;transform-origin:0 0;transform:scaleX(0.9500)">X</div>
<div class="t" style="left:404px;top:297px;font-size:14px;transform-origin:0 0;transform:scaleX(0.9426)">Ga : 2.75 dBi = 0 dB  (V поляризация)</div>
<div class="t" style="left:404px;top:314px;font-size:14px;transform-origin:0 0;transform:scaleX(0.9467)">F/B: 3.62 dB; Тыл: Азим. 120 гр, Элевация 60 гр</div>
<div class="t" style="left:404px;top:331px;font-size:14px;transform-origin:0 0;transform:scaleX(0.9393)">F: 7.010 МГц</div>
<div class="t" style="left:404px;top:348px;font-size:14px;transform-origin:0 0;transform:scaleX(0.9300)">Z: 217.005 - j3.754 Ом</div>
<div class="t" style="left:404px;top:365px;font-size:14px;transform-origin:0 0;transform:scaleX(0.9346)">КСВ: 1.1 (200.0 Ом),</div>
<div class="t" style="left:404px;top:382px;font-size:14px;transform-origin:0 0;transform:scaleX(0.9551)">Elev. гр.: 53.3 гр. (Реал. земля. Высота = 0.00 м)</div>
<div class="btn" style="left:103px;top:524px;width:120px;height:23px"></div>
<div class="t" style="left:121px;top:528px;font-size:14px;transform-origin:0 0;transform:scaleX(0.9350)">Зенитный угол</div>
<div class="btn" style="left:233px;top:524px;width:112px;height:23px"></div>
<div class="t" style="left:268px;top:528px;font-size:14px;transform-origin:0 0;transform:scaleX(0.9500)">3Д   ДН</div>
<div class="btn" style="left:664px;top:524px;width:85px;height:23px"></div>
<div class="t" style="left:687px;top:528px;font-size:14px;transform-origin:0 0;transform:scaleX(0.9300)">Печать</div>
<div class="a" style="left:357px;top:523px;width:295px;height:28px;box-sizing:border-box;border:1px solid #808080"></div>
<div class="a" style="left:358px;top:524px;width:295px;height:28px;box-sizing:border-box;border:1px solid #fff;border-right:none;border-bottom:none"></div>
<div class="a" style="left:652px;top:523px;width:1px;height:29px;background:#fff"></div>
<div class="a" style="left:357px;top:551px;width:296px;height:1px;background:#fff"></div>
<div class="a" style="left:365px;top:516px;width:186px;height:16px;overflow:hidden;background:#d4d0c8"><div class="t" style="left:4px;top:1px;font-size:14px;transform-origin:0 0;transform:scaleX(0.93)">Показать ДН для поляризации</div></div>
<svg class="a" style="left:0;top:0" width="770" height="556" shape-rendering="crispEdges"><path fill="#808080" d="M370 535h1v1h-1zM371 535h1v1h-1zM372 535h1v1h-1zM373 535h1v1h-1zM368 536h1v1h-1zM369 536h1v1h-1zM374 536h1v1h-1zM375 536h1v1h-1zM367 537h1v1h-1zM367 538h1v1h-1zM366 539h1v1h-1zM366 540h1v1h-1zM366 541h1v1h-1zM366 542h1v1h-1zM367 543h1v1h-1zM367 544h1v1h-1z"/><path fill="#ffffff" d="M376 537h1v1h-1zM376 538h1v1h-1zM377 539h1v1h-1zM377 540h1v1h-1zM377 541h1v1h-1zM377 542h1v1h-1zM376 543h1v1h-1zM376 544h1v1h-1zM368 545h1v1h-1zM369 545h1v1h-1zM374 545h1v1h-1zM375 545h1v1h-1zM370 546h1v1h-1zM371 546h1v1h-1zM372 546h1v1h-1zM373 546h1v1h-1zM370 537h1v1h-1zM371 537h1v1h-1zM372 537h1v1h-1zM373 537h1v1h-1zM369 538h1v1h-1zM370 538h1v1h-1zM371 538h1v1h-1zM372 538h1v1h-1zM373 538h1v1h-1zM374 538h1v1h-1zM368 539h1v1h-1zM369 539h1v1h-1zM370 539h1v1h-1zM371 539h1v1h-1zM372 539h1v1h-1zM373 539h1v1h-1zM374 539h1v1h-1zM375 539h1v1h-1zM368 540h1v1h-1zM369 540h1v1h-1zM370 540h1v1h-1zM371 540h1v1h-1zM372 540h1v1h-1zM373 540h1v1h-1zM374 540h1v1h-1zM375 540h1v1h-1zM368 541h1v1h-1zM369 541h1v1h-1zM370 541h1v1h-1zM371 541h1v1h-1zM372 541h1v1h-1zM373 541h1v1h-1zM374 541h1v1h-1zM375 541h1v1h-1zM368 542h1v1h-1zM369 542h1v1h-1zM370 542h1v1h-1zM371 542h1v1h-1zM372 542h1v1h-1zM373 542h1v1h-1zM374 542h1v1h-1zM375 542h1v1h-1zM369 543h1v1h-1zM370 543h1v1h-1zM371 543h1v1h-1zM372 543h1v1h-1zM373 543h1v1h-1zM374 543h1v1h-1zM370 544h1v1h-1zM371 544h1v1h-1zM372 544h1v1h-1zM373 544h1v1h-1z"/><path fill="#404040" d="M370 536h1v1h-1zM371 536h1v1h-1zM372 536h1v1h-1zM373 536h1v1h-1zM368 537h1v1h-1zM369 537h1v1h-1zM374 537h1v1h-1zM375 537h1v1h-1zM368 538h1v1h-1zM367 539h1v1h-1zM367 540h1v1h-1zM367 541h1v1h-1zM367 542h1v1h-1zM368 543h1v1h-1zM368 544h1v1h-1z"/><path fill="#d4d0c8" d="M375 538h1v1h-1zM376 539h1v1h-1zM376 540h1v1h-1zM376 541h1v1h-1zM376 542h1v1h-1zM375 543h1v1h-1zM369 544h1v1h-1zM374 544h1v1h-1zM375 544h1v1h-1zM370 545h1v1h-1zM371 545h1v1h-1zM372 545h1v1h-1zM373 545h1v1h-1z"/></svg>
<div class="t" style="left:382px;top:534px;font-size:14px;transform-origin:0 0;transform:scaleX(0.9500)">V</div>
<svg class="a" style="left:0;top:0" width="770" height="556" shape-rendering="crispEdges"><path fill="#808080" d="M441 535h1v1h-1zM442 535h1v1h-1zM443 535h1v1h-1zM444 535h1v1h-1zM439 536h1v1h-1zM440 536h1v1h-1zM445 536h1v1h-1zM446 536h1v1h-1zM438 537h1v1h-1zM438 538h1v1h-1zM437 539h1v1h-1zM437 540h1v1h-1zM437 541h1v1h-1zM437 542h1v1h-1zM438 543h1v1h-1zM438 544h1v1h-1z"/><path fill="#ffffff" d="M447 537h1v1h-1zM447 538h1v1h-1zM448 539h1v1h-1zM448 540h1v1h-1zM448 541h1v1h-1zM448 542h1v1h-1zM447 543h1v1h-1zM447 544h1v1h-1zM439 545h1v1h-1zM440 545h1v1h-1zM445 545h1v1h-1zM446 545h1v1h-1zM441 546h1v1h-1zM442 546h1v1h-1zM443 546h1v1h-1zM444 546h1v1h-1zM441 537h1v1h-1zM442 537h1v1h-1zM443 537h1v1h-1zM444 537h1v1h-1zM440 538h1v1h-1zM441 538h1v1h-1zM442 538h1v1h-1zM443 538h1v1h-1zM444 538h1v1h-1zM445 538h1v1h-1zM439 539h1v1h-1zM440 539h1v1h-1zM441 539h1v1h-1zM442 539h1v1h-1zM443 539h1v1h-1zM444 539h1v1h-1zM445 539h1v1h-1zM446 539h1v1h-1zM439 540h1v1h-1zM440 540h1v1h-1zM441 540h1v1h-1zM442 540h1v1h-1zM443 540h1v1h-1zM444 540h1v1h-1zM445 540h1v1h-1zM446 540h1v1h-1zM439 541h1v1h-1zM440 541h1v1h-1zM441 541h1v1h-1zM442 541h1v1h-1zM443 541h1v1h-1zM444 541h1v1h-1zM445 541h1v1h-1zM446 541h1v1h-1zM439 542h1v1h-1zM440 542h1v1h-1zM441 542h1v1h-1zM442 542h1v1h-1zM443 542h1v1h-1zM444 542h1v1h-1zM445 542h1v1h-1zM446 542h1v1h-1zM440 543h1v1h-1zM441 543h1v1h-1zM442 543h1v1h-1zM443 543h1v1h-1zM444 543h1v1h-1zM445 543h1v1h-1zM441 544h1v1h-1zM442 544h1v1h-1zM443 544h1v1h-1zM444 544h1v1h-1z"/><path fill="#404040" d="M441 536h1v1h-1zM442 536h1v1h-1zM443 536h1v1h-1zM444 536h1v1h-1zM439 537h1v1h-1zM440 537h1v1h-1zM445 537h1v1h-1zM446 537h1v1h-1zM439 538h1v1h-1zM438 539h1v1h-1zM438 540h1v1h-1zM438 541h1v1h-1zM438 542h1v1h-1zM439 543h1v1h-1zM439 544h1v1h-1z"/><path fill="#d4d0c8" d="M446 538h1v1h-1zM447 539h1v1h-1zM447 540h1v1h-1zM447 541h1v1h-1zM447 542h1v1h-1zM446 543h1v1h-1zM440 544h1v1h-1zM445 544h1v1h-1zM446 544h1v1h-1zM441 545h1v1h-1zM442 545h1v1h-1zM443 545h1v1h-1zM444 545h1v1h-1z"/></svg>
<div class="t" style="left:453px;top:534px;font-size:14px;transform-origin:0 0;transform:scaleX(0.9500)">H</div>
<svg class="a" style="left:0;top:0" width="770" height="556" shape-rendering="crispEdges"><path fill="#808080" d="M512 535h1v1h-1zM513 535h1v1h-1zM514 535h1v1h-1zM515 535h1v1h-1zM510 536h1v1h-1zM511 536h1v1h-1zM516 536h1v1h-1zM517 536h1v1h-1zM509 537h1v1h-1zM509 538h1v1h-1zM508 539h1v1h-1zM508 540h1v1h-1zM508 541h1v1h-1zM508 542h1v1h-1zM509 543h1v1h-1zM509 544h1v1h-1z"/><path fill="#ffffff" d="M518 537h1v1h-1zM518 538h1v1h-1zM519 539h1v1h-1zM519 540h1v1h-1zM519 541h1v1h-1zM519 542h1v1h-1zM518 543h1v1h-1zM518 544h1v1h-1zM510 545h1v1h-1zM511 545h1v1h-1zM516 545h1v1h-1zM517 545h1v1h-1zM512 546h1v1h-1zM513 546h1v1h-1zM514 546h1v1h-1zM515 546h1v1h-1zM512 537h1v1h-1zM513 537h1v1h-1zM514 537h1v1h-1zM515 537h1v1h-1zM511 538h1v1h-1zM512 538h1v1h-1zM513 538h1v1h-1zM514 538h1v1h-1zM515 538h1v1h-1zM516 538h1v1h-1zM510 539h1v1h-1zM511 539h1v1h-1zM512 539h1v1h-1zM513 539h1v1h-1zM514 539h1v1h-1zM515 539h1v1h-1zM516 539h1v1h-1zM517 539h1v1h-1zM510 540h1v1h-1zM511 540h1v1h-1zM512 540h1v1h-1zM513 540h1v1h-1zM514 540h1v1h-1zM515 540h1v1h-1zM516 540h1v1h-1zM517 540h1v1h-1zM510 541h1v1h-1zM511 541h1v1h-1zM512 541h1v1h-1zM513 541h1v1h-1zM514 541h1v1h-1zM515 541h1v1h-1zM516 541h1v1h-1zM517 541h1v1h-1zM510 542h1v1h-1zM511 542h1v1h-1zM512 542h1v1h-1zM513 542h1v1h-1zM514 542h1v1h-1zM515 542h1v1h-1zM516 542h1v1h-1zM517 542h1v1h-1zM511 543h1v1h-1zM512 543h1v1h-1zM513 543h1v1h-1zM514 543h1v1h-1zM515 543h1v1h-1zM516 543h1v1h-1zM512 544h1v1h-1zM513 544h1v1h-1zM514 544h1v1h-1zM515 544h1v1h-1z"/><path fill="#404040" d="M512 536h1v1h-1zM513 536h1v1h-1zM514 536h1v1h-1zM515 536h1v1h-1zM510 537h1v1h-1zM511 537h1v1h-1zM516 537h1v1h-1zM517 537h1v1h-1zM510 538h1v1h-1zM509 539h1v1h-1zM509 540h1v1h-1zM509 541h1v1h-1zM509 542h1v1h-1zM510 543h1v1h-1zM510 544h1v1h-1z"/><path fill="#d4d0c8" d="M517 538h1v1h-1zM518 539h1v1h-1zM518 540h1v1h-1zM518 541h1v1h-1zM518 542h1v1h-1zM517 543h1v1h-1zM511 544h1v1h-1zM516 544h1v1h-1zM517 544h1v1h-1zM512 545h1v1h-1zM513 545h1v1h-1zM514 545h1v1h-1zM515 545h1v1h-1z"/><path fill="#000000" d="M513 539h1v1h-1zM514 539h1v1h-1zM512 540h1v1h-1zM513 540h1v1h-1zM514 540h1v1h-1zM515 540h1v1h-1zM512 541h1v1h-1zM513 541h1v1h-1zM514 541h1v1h-1zM515 541h1v1h-1zM513 542h1v1h-1zM514 542h1v1h-1z"/></svg>
<div class="t" style="left:525px;top:534px;font-size:14px;transform-origin:0 0;transform:scaleX(0.9500)">Total</div>
<svg class="a" style="left:0;top:0" width="770" height="556" shape-rendering="crispEdges"><path fill="#808080" d="M583 535h1v1h-1zM584 535h1v1h-1zM585 535h1v1h-1zM586 535h1v1h-1zM581 536h1v1h-1zM582 536h1v1h-1zM587 536h1v1h-1zM588 536h1v1h-1zM580 537h1v1h-1zM580 538h1v1h-1zM579 539h1v1h-1zM579 540h1v1h-1zM579 541h1v1h-1zM579 542h1v1h-1zM580 543h1v1h-1zM580 544h1v1h-1z"/><path fill="#ffffff" d="M589 537h1v1h-1zM589 538h1v1h-1zM590 539h1v1h-1zM590 540h1v1h-1zM590 541h1v1h-1zM590 542h1v1h-1zM589 543h1v1h-1zM589 544h1v1h-1zM581 545h1v1h-1zM582 545h1v1h-1zM587 545h1v1h-1zM588 545h1v1h-1zM583 546h1v1h-1zM584 546h1v1h-1zM585 546h1v1h-1zM586 546h1v1h-1zM583 537h1v1h-1zM584 537h1v1h-1zM585 537h1v1h-1zM586 537h1v1h-1zM582 538h1v1h-1zM583 538h1v1h-1zM584 538h1v1h-1zM585 538h1v1h-1zM586 538h1v1h-1zM587 538h1v1h-1zM581 539h1v1h-1zM582 539h1v1h-1zM583 539h1v1h-1zM584 539h1v1h-1zM585 539h1v1h-1zM586 539h1v1h-1zM587 539h1v1h-1zM588 539h1v1h-1zM581 540h1v1h-1zM582 540h1v1h-1zM583 540h1v1h-1zM584 540h1v1h-1zM585 540h1v1h-1zM586 540h1v1h-1zM587 540h1v1h-1zM588 540h1v1h-1zM581 541h1v1h-1zM582 541h1v1h-1zM583 541h1v1h-1zM584 541h1v1h-1zM585 541h1v1h-1zM586 541h1v1h-1zM587 541h1v1h-1zM588 541h1v1h-1zM581 542h1v1h-1zM582 542h1v1h-1zM583 542h1v1h-1zM584 542h1v1h-1zM585 542h1v1h-1zM586 542h1v1h-1zM587 542h1v1h-1zM588 542h1v1h-1zM582 543h1v1h-1zM583 543h1v1h-1zM584 543h1v1h-1zM585 543h1v1h-1zM586 543h1v1h-1zM587 543h1v1h-1zM583 544h1v1h-1zM584 544h1v1h-1zM585 544h1v1h-1zM586 544h1v1h-1z"/><path fill="#404040" d="M583 536h1v1h-1zM584 536h1v1h-1zM585 536h1v1h-1zM586 536h1v1h-1zM581 537h1v1h-1zM582 537h1v1h-1zM587 537h1v1h-1zM588 537h1v1h-1zM581 538h1v1h-1zM580 539h1v1h-1zM580 540h1v1h-1zM580 541h1v1h-1zM580 542h1v1h-1zM581 543h1v1h-1zM581 544h1v1h-1z"/><path fill="#d4d0c8" d="M588 538h1v1h-1zM589 539h1v1h-1zM589 540h1v1h-1zM589 541h1v1h-1zM589 542h1v1h-1zM588 543h1v1h-1zM582 544h1v1h-1zM587 544h1v1h-1zM588 544h1v1h-1zM583 545h1v1h-1zM584 545h1v1h-1zM585 545h1v1h-1zM586 545h1v1h-1z"/></svg>
<div class="t" style="left:595px;top:534px;font-size:14px;transform-origin:0 0;transform:scaleX(0.9500)">V+H</div>
</body></html>
